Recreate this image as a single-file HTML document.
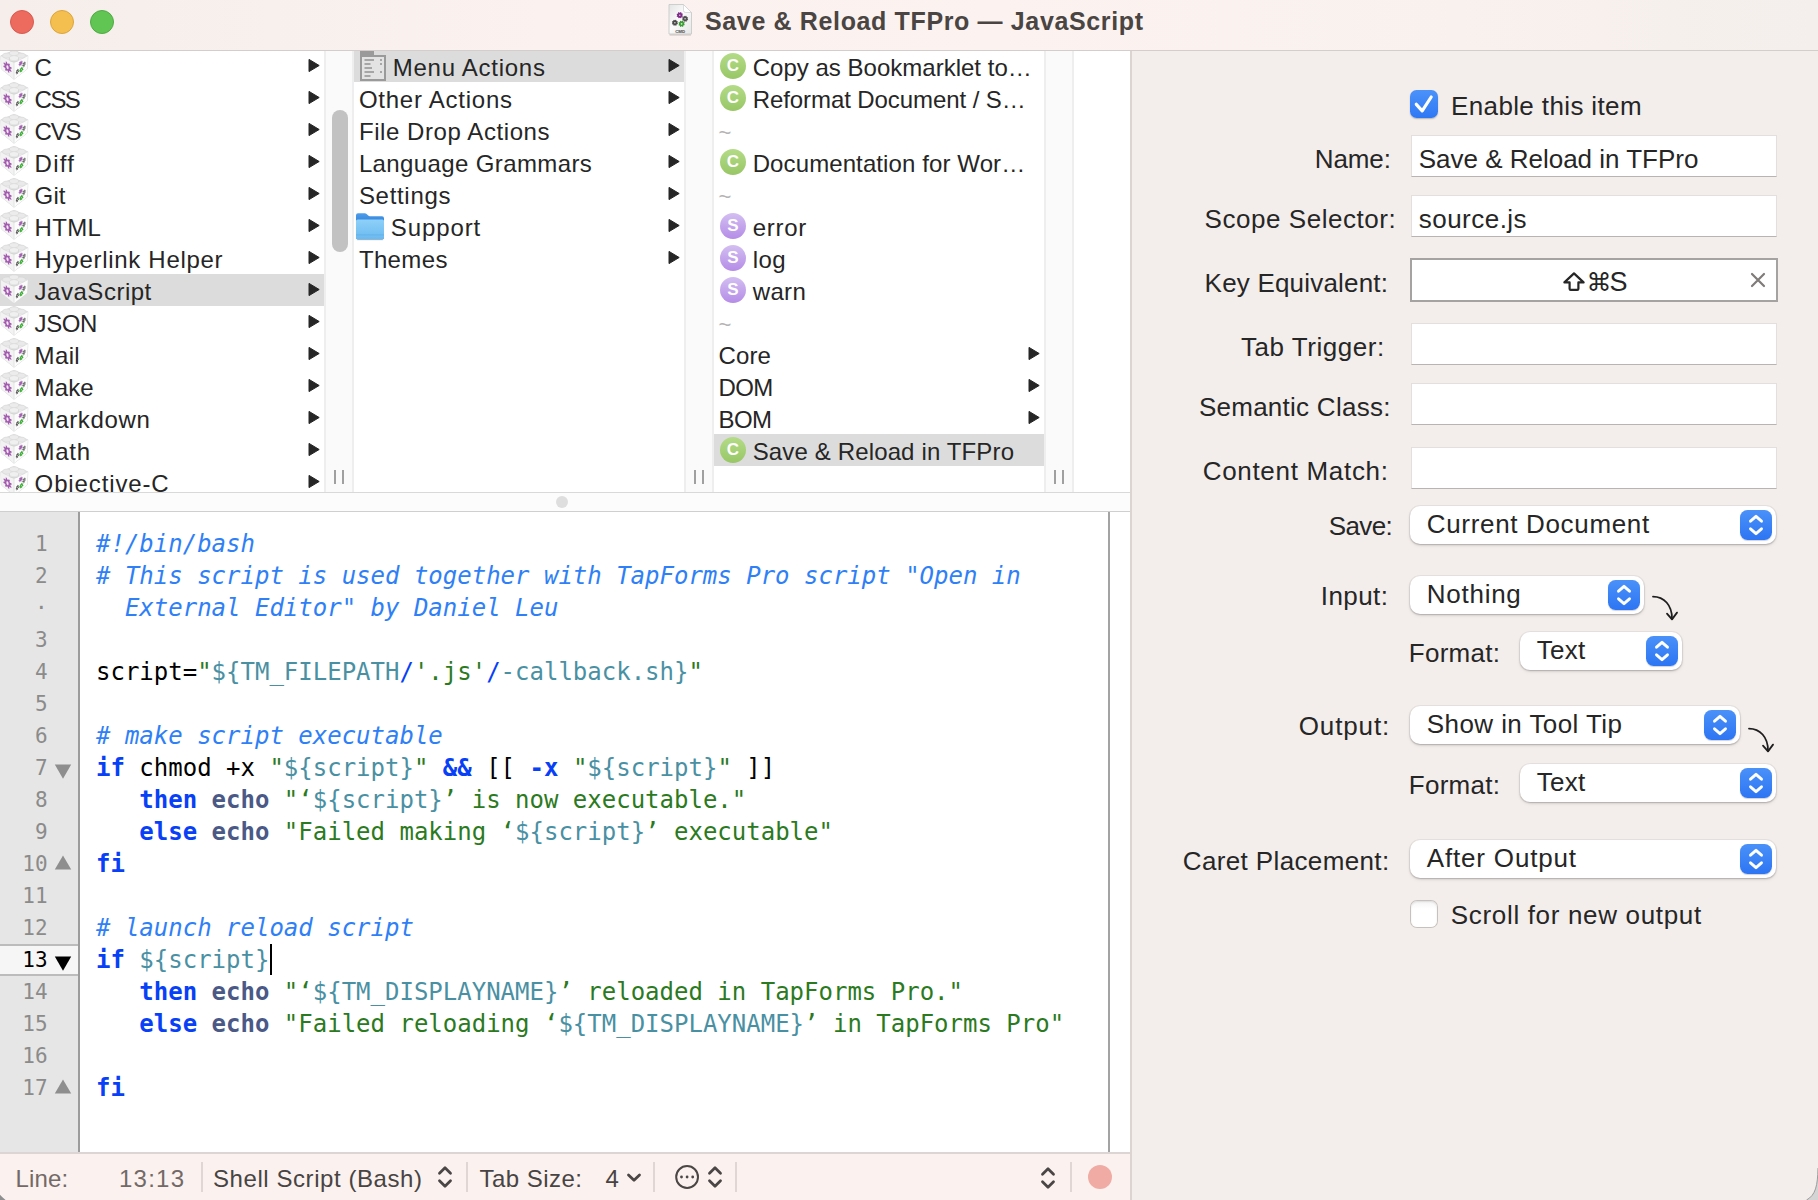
<!DOCTYPE html>
<html lang="en"><head><meta charset="utf-8"><title>Save &amp; Reload TFPro — JavaScript</title>
<style>
html,body{margin:0;padding:0}
body{width:1818px;height:1200px;overflow:hidden;position:relative;background:#f3eeeb;font-family:"Liberation Sans",sans-serif}
.ab{position:absolute;display:block}
.t{position:absolute;white-space:pre;line-height:32px;height:32px}
.fld{position:absolute;background:#fff;box-sizing:border-box;border:1px solid #e4dfdc;border-bottom-color:#b9b4b1}
.pop{position:absolute;background:#fff;border-radius:10px;box-shadow:0 0 0 1px rgba(0,0,0,.045),0 1px 2px rgba(0,0,0,.22),0 2px 4px rgba(0,0,0,.06);height:38px}
.stp{position:absolute;width:32px;height:30px;border-radius:7.5px;background:linear-gradient(#4a91f9,#2d75f3);box-shadow:0 1px 1px rgba(0,0,0,.18)}
</style></head><body>

<div class="ab" style="left:0;top:0;width:1818px;height:50px;background:linear-gradient(90deg,#f5eeeb 0%,#fbf2ef 30%,#fcf3f0 55%,#f9f1ee 80%,#f4efec 100%)"></div>
<div class="ab" style="left:0;top:50px;width:1818px;height:1px;background:#d3cdcb"></div>
<div class="ab" style="left:10px;top:10px;width:24px;height:24px;border-radius:12px;background:#ed6a5e;box-sizing:border-box;border:1px solid #d95a4e"></div>
<div class="ab" style="left:50px;top:10px;width:24px;height:24px;border-radius:12px;background:#f5bf4f;box-sizing:border-box;border:1px solid #dba53c"></div>
<div class="ab" style="left:90px;top:10px;width:24px;height:24px;border-radius:12px;background:#61c554;box-sizing:border-box;border:1px solid #50ab44"></div>
<svg class="ab" style="left:667px;top:3px" width="26" height="34" viewBox="0 0 26 34">
<defs><linearGradient id="dg" x1="0" y1="0" x2="1" y2="1"><stop offset="0" stop-color="#e4e4e4"/><stop offset="0.45" stop-color="#fbfbfb"/><stop offset="1" stop-color="#e6e6e6"/></linearGradient></defs>
<path d="M2.6 31.9 H24" stroke="#b8b0ad" stroke-width="1.2" opacity="0.7"/>
<path d="M2 1.5 H16.5 L24.5 9.5 V31 H2 Z" fill="url(#dg)" stroke="#c9c9c9" stroke-width="0.9"/>
<path d="M16.5 1.5 V7.5 Q16.5 9.5 18.5 9.5 H24.5 Z" fill="#ffffff" stroke="#cfcfcf" stroke-width="0.7"/>
<g transform="translate(12.8 12.2) scale(1.2)"><path d="M2.14 0.21 L2.62 0.65 L2.38 1.28 L1.73 1.27 L1.36 1.66 L1.40 2.31 L0.78 2.59 L0.32 2.13 L-0.21 2.14 L-0.65 2.62 L-1.28 2.38 L-1.27 1.73 L-1.66 1.36 L-2.31 1.40 L-2.59 0.78 L-2.13 0.32 L-2.14 -0.21 L-2.62 -0.65 L-2.38 -1.28 L-1.73 -1.27 L-1.36 -1.66 L-1.40 -2.31 L-0.78 -2.59 L-0.32 -2.13 L0.21 -2.14 L0.65 -2.62 L1.28 -2.38 L1.27 -1.73 L1.66 -1.36 L2.31 -1.40 L2.59 -0.78 L2.13 -0.32 Z" fill="#7d2b86"/><circle r="0.6" fill="#e6d5ea"/></g><g transform="translate(18.1 15.8) scale(1.15)"><path d="M2.14 0.21 L2.62 0.65 L2.38 1.28 L1.73 1.27 L1.36 1.66 L1.40 2.31 L0.78 2.59 L0.32 2.13 L-0.21 2.14 L-0.65 2.62 L-1.28 2.38 L-1.27 1.73 L-1.66 1.36 L-2.31 1.40 L-2.59 0.78 L-2.13 0.32 L-2.14 -0.21 L-2.62 -0.65 L-2.38 -1.28 L-1.73 -1.27 L-1.36 -1.66 L-1.40 -2.31 L-0.78 -2.59 L-0.32 -2.13 L0.21 -2.14 L0.65 -2.62 L1.28 -2.38 L1.27 -1.73 L1.66 -1.36 L2.31 -1.40 L2.59 -0.78 L2.13 -0.32 Z" fill="#4f4f4f"/><circle r="0.7" fill="#d8d8d8"/></g>
<g transform="translate(7.9 19.8) scale(1.15)"><path d="M2.14 0.21 L2.62 0.65 L2.38 1.28 L1.73 1.27 L1.36 1.66 L1.40 2.31 L0.78 2.59 L0.32 2.13 L-0.21 2.14 L-0.65 2.62 L-1.28 2.38 L-1.27 1.73 L-1.66 1.36 L-2.31 1.40 L-2.59 0.78 L-2.13 0.32 L-2.14 -0.21 L-2.62 -0.65 L-2.38 -1.28 L-1.73 -1.27 L-1.36 -1.66 L-1.40 -2.31 L-0.78 -2.59 L-0.32 -2.13 L0.21 -2.14 L0.65 -2.62 L1.28 -2.38 L1.27 -1.73 L1.66 -1.36 L2.31 -1.40 L2.59 -0.78 L2.13 -0.32 Z" fill="#474747"/><circle r="0.7" fill="#d8d8d8"/></g><g transform="translate(14.6 20.8) scale(1.2)"><path d="M2.14 0.21 L2.62 0.65 L2.38 1.28 L1.73 1.27 L1.36 1.66 L1.40 2.31 L0.78 2.59 L0.32 2.13 L-0.21 2.14 L-0.65 2.62 L-1.28 2.38 L-1.27 1.73 L-1.66 1.36 L-2.31 1.40 L-2.59 0.78 L-2.13 0.32 L-2.14 -0.21 L-2.62 -0.65 L-2.38 -1.28 L-1.73 -1.27 L-1.36 -1.66 L-1.40 -2.31 L-0.78 -2.59 L-0.32 -2.13 L0.21 -2.14 L0.65 -2.62 L1.28 -2.38 L1.27 -1.73 L1.66 -1.36 L2.31 -1.40 L2.59 -0.78 L2.13 -0.32 Z" fill="#3a9c34"/><circle r="0.7" fill="#cfeccd"/></g>
<text x="13.2" y="30" font-size="4.4" font-weight="bold" text-anchor="middle" fill="#444" font-family="Liberation Sans, sans-serif">CMD</text>
</svg>
<span class="t" id="t0" style="top:5.34px;font-size:25px;color:#4a4543;font-weight:bold;letter-spacing:0.639px;left:705px;">Save &amp; Reload TFPro — JavaScript</span>
<div class="ab" style="left:0;top:51px;width:1130px;height:441px;background:#fff"></div>
<div class="ab" style="left:0;top:51px;width:1130px;height:441px;overflow:hidden">
<div class="ab" style="left:0;top:223px;width:324px;height:32px;background:#dcdcdc"></div>
<div class="ab" style="left:354px;top:-1px;width:330px;height:32px;background:#dcdcdc"></div>
<div class="ab" style="left:714px;top:383px;width:330px;height:32px;background:#dcdcdc"></div>
<div class="ab" style="left:324px;top:0;width:30px;height:441px;background:#fafafa;box-sizing:border-box;border-left:2px solid #eeeeee;border-right:2px solid #eeeeee"></div>
<div class="ab" style="left:334px;top:419px;width:2px;height:14px;background:#a0a0a0"></div>
<div class="ab" style="left:342px;top:419px;width:2px;height:14px;background:#a0a0a0"></div>
<div class="ab" style="left:684px;top:0;width:30px;height:441px;background:#fafafa;box-sizing:border-box;border-left:2px solid #eeeeee;border-right:2px solid #eeeeee"></div>
<div class="ab" style="left:694px;top:419px;width:2px;height:14px;background:#a0a0a0"></div>
<div class="ab" style="left:702px;top:419px;width:2px;height:14px;background:#a0a0a0"></div>
<div class="ab" style="left:1044px;top:0;width:30px;height:441px;background:#fafafa;box-sizing:border-box;border-left:2px solid #eeeeee;border-right:2px solid #eeeeee"></div>
<div class="ab" style="left:1054px;top:419px;width:2px;height:14px;background:#a0a0a0"></div>
<div class="ab" style="left:1062px;top:419px;width:2px;height:14px;background:#a0a0a0"></div>
<div class="ab" style="left:332px;top:59px;width:16px;height:142px;border-radius:8px;background:#c2c2c2"></div>
<svg class="ab" style="left:0px;top:-1px" width="29" height="30" viewBox="0 0 29 30">
<path d="M14 0.6 L27.8 5.8 L27.2 19 L14 29.2 L1.4 19 L0.9 5.8 Z" fill="#f6f6f6" stroke="#d6d6d6" stroke-width="0.9" stroke-linejoin="round"/>
<path d="M14 12.6 L27.8 5.8 L27.2 19 L14 29.2 Z" fill="#fcfcfc"/>
<path d="M14 12.6 L0.9 5.8 L1.4 19 L14 29.2 Z" fill="#f3f3f3"/>
<path d="M0.9 5.8 L14 12.6 L27.8 5.8 M14 12.6 L14 29.2" fill="none" stroke="#dedede" stroke-width="0.8"/>
<ellipse cx="7.2" cy="5.6" rx="4.6" ry="2.5" fill="#e9e9e9" stroke="#d5d5d5" stroke-width="0.6"/>
<ellipse cx="20.8" cy="5.6" rx="4.6" ry="2.5" fill="#e9e9e9" stroke="#d5d5d5" stroke-width="0.6"/>
<ellipse cx="14" cy="3.2" rx="4.6" ry="2.4" fill="#ececec" stroke="#d5d5d5" stroke-width="0.6"/>
<ellipse cx="14" cy="9" rx="4.8" ry="2.7" fill="#e4e4e4" stroke="#cfcfcf" stroke-width="0.7"/>
<ellipse cx="14" cy="8" rx="4.2" ry="2.1" fill="#f0f0f0"/>
<g transform="matrix(0.86 0.5 0 1 7.5 17.2)"><path d="M3.43 0.70 L4.71 1.67 L4.15 2.79 L2.60 2.34 L1.93 2.92 L2.15 4.52 L0.96 4.91 L0.18 3.50 L-0.70 3.43 L-1.67 4.71 L-2.79 4.15 L-2.34 2.60 L-2.92 1.93 L-4.52 2.15 L-4.91 0.96 L-3.50 0.18 L-3.43 -0.70 L-4.71 -1.67 L-4.15 -2.79 L-2.60 -2.34 L-1.93 -2.92 L-2.15 -4.52 L-0.96 -4.91 L-0.18 -3.50 L0.70 -3.43 L1.67 -4.71 L2.79 -4.15 L2.34 -2.60 L2.92 -1.93 L4.52 -2.15 L4.91 -0.96 L3.50 -0.18 Z" fill="#a35bb0"/><ellipse cx="0" cy="0" rx="1.3" ry="1.9" fill="#f3ecf5"/></g>
<g transform="matrix(0.8 -0.5 0 1 20.7 13.3)"><path d="M1.79 0.18 L2.51 0.67 L2.22 1.36 L1.36 1.17 L0.98 1.51 L1.04 2.38 L0.32 2.58 L-0.07 1.80 L-0.57 1.71 L-1.21 2.30 L-1.82 1.86 L-1.45 1.07 L-1.69 0.62 L-2.55 0.48 L-2.59 -0.26 L-1.74 -0.47 L-1.54 -0.94 L-1.97 -1.70 L-1.41 -2.18 L-0.72 -1.65 L-0.22 -1.79 L0.10 -2.60 L0.83 -2.46 L0.84 -1.59 L1.26 -1.29 L2.09 -1.54 L2.44 -0.89 L1.77 -0.34 Z" fill="#a660b3"/></g>
<g transform="matrix(0.7 -0.5 0 1 24 14.3)"><path d="M1.79 0.18 L2.51 0.67 L2.22 1.36 L1.36 1.17 L0.98 1.51 L1.04 2.38 L0.32 2.58 L-0.07 1.80 L-0.57 1.71 L-1.21 2.30 L-1.82 1.86 L-1.45 1.07 L-1.69 0.62 L-2.55 0.48 L-2.59 -0.26 L-1.74 -0.47 L-1.54 -0.94 L-1.97 -1.70 L-1.41 -2.18 L-0.72 -1.65 L-0.22 -1.79 L0.10 -2.60 L0.83 -2.46 L0.84 -1.59 L1.26 -1.29 L2.09 -1.54 L2.44 -0.89 L1.77 -0.34 Z" fill="#6a6a6a"/><circle r="0.7" fill="#ddd"/></g>
<g transform="matrix(0.85 -0.5 0 1 21.3 19.7)"><path d="M1.79 0.18 L2.51 0.67 L2.22 1.36 L1.36 1.17 L0.98 1.51 L1.04 2.38 L0.32 2.58 L-0.07 1.80 L-0.57 1.71 L-1.21 2.30 L-1.82 1.86 L-1.45 1.07 L-1.69 0.62 L-2.55 0.48 L-2.59 -0.26 L-1.74 -0.47 L-1.54 -0.94 L-1.97 -1.70 L-1.41 -2.18 L-0.72 -1.65 L-0.22 -1.79 L0.10 -2.60 L0.83 -2.46 L0.84 -1.59 L1.26 -1.29 L2.09 -1.54 L2.44 -0.89 L1.77 -0.34 Z" fill="#3aae35"/><circle r="0.6" fill="#bfe6bd"/></g>
<g transform="matrix(0.65 -0.5 0 1 17.4 21.6)"><path d="M1.79 0.18 L2.51 0.67 L2.22 1.36 L1.36 1.17 L0.98 1.51 L1.04 2.38 L0.32 2.58 L-0.07 1.80 L-0.57 1.71 L-1.21 2.30 L-1.82 1.86 L-1.45 1.07 L-1.69 0.62 L-2.55 0.48 L-2.59 -0.26 L-1.74 -0.47 L-1.54 -0.94 L-1.97 -1.70 L-1.41 -2.18 L-0.72 -1.65 L-0.22 -1.79 L0.10 -2.60 L0.83 -2.46 L0.84 -1.59 L1.26 -1.29 L2.09 -1.54 L2.44 -0.89 L1.77 -0.34 Z" fill="#555"/><circle r="0.7" fill="#ddd"/></g>
</svg>
<span class="t" id="t1" style="top:0.68px;font-size:24px;color:#262626;left:34.6px;">C</span>
<svg class="ab" style="left:308px;top:7px" width="13" height="15" viewBox="0 0 13 15"><path d="M1 1.4 L11.2 7.5 L1 13.6 Z" fill="#262626" stroke="#262626" stroke-width="1" stroke-linejoin="round"/></svg>
<svg class="ab" style="left:0px;top:31px" width="29" height="30" viewBox="0 0 29 30">
<path d="M14 0.6 L27.8 5.8 L27.2 19 L14 29.2 L1.4 19 L0.9 5.8 Z" fill="#f6f6f6" stroke="#d6d6d6" stroke-width="0.9" stroke-linejoin="round"/>
<path d="M14 12.6 L27.8 5.8 L27.2 19 L14 29.2 Z" fill="#fcfcfc"/>
<path d="M14 12.6 L0.9 5.8 L1.4 19 L14 29.2 Z" fill="#f3f3f3"/>
<path d="M0.9 5.8 L14 12.6 L27.8 5.8 M14 12.6 L14 29.2" fill="none" stroke="#dedede" stroke-width="0.8"/>
<ellipse cx="7.2" cy="5.6" rx="4.6" ry="2.5" fill="#e9e9e9" stroke="#d5d5d5" stroke-width="0.6"/>
<ellipse cx="20.8" cy="5.6" rx="4.6" ry="2.5" fill="#e9e9e9" stroke="#d5d5d5" stroke-width="0.6"/>
<ellipse cx="14" cy="3.2" rx="4.6" ry="2.4" fill="#ececec" stroke="#d5d5d5" stroke-width="0.6"/>
<ellipse cx="14" cy="9" rx="4.8" ry="2.7" fill="#e4e4e4" stroke="#cfcfcf" stroke-width="0.7"/>
<ellipse cx="14" cy="8" rx="4.2" ry="2.1" fill="#f0f0f0"/>
<g transform="matrix(0.86 0.5 0 1 7.5 17.2)"><path d="M3.43 0.70 L4.71 1.67 L4.15 2.79 L2.60 2.34 L1.93 2.92 L2.15 4.52 L0.96 4.91 L0.18 3.50 L-0.70 3.43 L-1.67 4.71 L-2.79 4.15 L-2.34 2.60 L-2.92 1.93 L-4.52 2.15 L-4.91 0.96 L-3.50 0.18 L-3.43 -0.70 L-4.71 -1.67 L-4.15 -2.79 L-2.60 -2.34 L-1.93 -2.92 L-2.15 -4.52 L-0.96 -4.91 L-0.18 -3.50 L0.70 -3.43 L1.67 -4.71 L2.79 -4.15 L2.34 -2.60 L2.92 -1.93 L4.52 -2.15 L4.91 -0.96 L3.50 -0.18 Z" fill="#a35bb0"/><ellipse cx="0" cy="0" rx="1.3" ry="1.9" fill="#f3ecf5"/></g>
<g transform="matrix(0.8 -0.5 0 1 20.7 13.3)"><path d="M1.79 0.18 L2.51 0.67 L2.22 1.36 L1.36 1.17 L0.98 1.51 L1.04 2.38 L0.32 2.58 L-0.07 1.80 L-0.57 1.71 L-1.21 2.30 L-1.82 1.86 L-1.45 1.07 L-1.69 0.62 L-2.55 0.48 L-2.59 -0.26 L-1.74 -0.47 L-1.54 -0.94 L-1.97 -1.70 L-1.41 -2.18 L-0.72 -1.65 L-0.22 -1.79 L0.10 -2.60 L0.83 -2.46 L0.84 -1.59 L1.26 -1.29 L2.09 -1.54 L2.44 -0.89 L1.77 -0.34 Z" fill="#a660b3"/></g>
<g transform="matrix(0.7 -0.5 0 1 24 14.3)"><path d="M1.79 0.18 L2.51 0.67 L2.22 1.36 L1.36 1.17 L0.98 1.51 L1.04 2.38 L0.32 2.58 L-0.07 1.80 L-0.57 1.71 L-1.21 2.30 L-1.82 1.86 L-1.45 1.07 L-1.69 0.62 L-2.55 0.48 L-2.59 -0.26 L-1.74 -0.47 L-1.54 -0.94 L-1.97 -1.70 L-1.41 -2.18 L-0.72 -1.65 L-0.22 -1.79 L0.10 -2.60 L0.83 -2.46 L0.84 -1.59 L1.26 -1.29 L2.09 -1.54 L2.44 -0.89 L1.77 -0.34 Z" fill="#6a6a6a"/><circle r="0.7" fill="#ddd"/></g>
<g transform="matrix(0.85 -0.5 0 1 21.3 19.7)"><path d="M1.79 0.18 L2.51 0.67 L2.22 1.36 L1.36 1.17 L0.98 1.51 L1.04 2.38 L0.32 2.58 L-0.07 1.80 L-0.57 1.71 L-1.21 2.30 L-1.82 1.86 L-1.45 1.07 L-1.69 0.62 L-2.55 0.48 L-2.59 -0.26 L-1.74 -0.47 L-1.54 -0.94 L-1.97 -1.70 L-1.41 -2.18 L-0.72 -1.65 L-0.22 -1.79 L0.10 -2.60 L0.83 -2.46 L0.84 -1.59 L1.26 -1.29 L2.09 -1.54 L2.44 -0.89 L1.77 -0.34 Z" fill="#3aae35"/><circle r="0.6" fill="#bfe6bd"/></g>
<g transform="matrix(0.65 -0.5 0 1 17.4 21.6)"><path d="M1.79 0.18 L2.51 0.67 L2.22 1.36 L1.36 1.17 L0.98 1.51 L1.04 2.38 L0.32 2.58 L-0.07 1.80 L-0.57 1.71 L-1.21 2.30 L-1.82 1.86 L-1.45 1.07 L-1.69 0.62 L-2.55 0.48 L-2.59 -0.26 L-1.74 -0.47 L-1.54 -0.94 L-1.97 -1.70 L-1.41 -2.18 L-0.72 -1.65 L-0.22 -1.79 L0.10 -2.60 L0.83 -2.46 L0.84 -1.59 L1.26 -1.29 L2.09 -1.54 L2.44 -0.89 L1.77 -0.34 Z" fill="#555"/><circle r="0.7" fill="#ddd"/></g>
</svg>
<span class="t" id="t2" style="top:32.68px;font-size:24px;color:#262626;letter-spacing:-1.530px;left:34.6px;">CSS</span>
<svg class="ab" style="left:308px;top:39px" width="13" height="15" viewBox="0 0 13 15"><path d="M1 1.4 L11.2 7.5 L1 13.6 Z" fill="#262626" stroke="#262626" stroke-width="1" stroke-linejoin="round"/></svg>
<svg class="ab" style="left:0px;top:63px" width="29" height="30" viewBox="0 0 29 30">
<path d="M14 0.6 L27.8 5.8 L27.2 19 L14 29.2 L1.4 19 L0.9 5.8 Z" fill="#f6f6f6" stroke="#d6d6d6" stroke-width="0.9" stroke-linejoin="round"/>
<path d="M14 12.6 L27.8 5.8 L27.2 19 L14 29.2 Z" fill="#fcfcfc"/>
<path d="M14 12.6 L0.9 5.8 L1.4 19 L14 29.2 Z" fill="#f3f3f3"/>
<path d="M0.9 5.8 L14 12.6 L27.8 5.8 M14 12.6 L14 29.2" fill="none" stroke="#dedede" stroke-width="0.8"/>
<ellipse cx="7.2" cy="5.6" rx="4.6" ry="2.5" fill="#e9e9e9" stroke="#d5d5d5" stroke-width="0.6"/>
<ellipse cx="20.8" cy="5.6" rx="4.6" ry="2.5" fill="#e9e9e9" stroke="#d5d5d5" stroke-width="0.6"/>
<ellipse cx="14" cy="3.2" rx="4.6" ry="2.4" fill="#ececec" stroke="#d5d5d5" stroke-width="0.6"/>
<ellipse cx="14" cy="9" rx="4.8" ry="2.7" fill="#e4e4e4" stroke="#cfcfcf" stroke-width="0.7"/>
<ellipse cx="14" cy="8" rx="4.2" ry="2.1" fill="#f0f0f0"/>
<g transform="matrix(0.86 0.5 0 1 7.5 17.2)"><path d="M3.43 0.70 L4.71 1.67 L4.15 2.79 L2.60 2.34 L1.93 2.92 L2.15 4.52 L0.96 4.91 L0.18 3.50 L-0.70 3.43 L-1.67 4.71 L-2.79 4.15 L-2.34 2.60 L-2.92 1.93 L-4.52 2.15 L-4.91 0.96 L-3.50 0.18 L-3.43 -0.70 L-4.71 -1.67 L-4.15 -2.79 L-2.60 -2.34 L-1.93 -2.92 L-2.15 -4.52 L-0.96 -4.91 L-0.18 -3.50 L0.70 -3.43 L1.67 -4.71 L2.79 -4.15 L2.34 -2.60 L2.92 -1.93 L4.52 -2.15 L4.91 -0.96 L3.50 -0.18 Z" fill="#a35bb0"/><ellipse cx="0" cy="0" rx="1.3" ry="1.9" fill="#f3ecf5"/></g>
<g transform="matrix(0.8 -0.5 0 1 20.7 13.3)"><path d="M1.79 0.18 L2.51 0.67 L2.22 1.36 L1.36 1.17 L0.98 1.51 L1.04 2.38 L0.32 2.58 L-0.07 1.80 L-0.57 1.71 L-1.21 2.30 L-1.82 1.86 L-1.45 1.07 L-1.69 0.62 L-2.55 0.48 L-2.59 -0.26 L-1.74 -0.47 L-1.54 -0.94 L-1.97 -1.70 L-1.41 -2.18 L-0.72 -1.65 L-0.22 -1.79 L0.10 -2.60 L0.83 -2.46 L0.84 -1.59 L1.26 -1.29 L2.09 -1.54 L2.44 -0.89 L1.77 -0.34 Z" fill="#a660b3"/></g>
<g transform="matrix(0.7 -0.5 0 1 24 14.3)"><path d="M1.79 0.18 L2.51 0.67 L2.22 1.36 L1.36 1.17 L0.98 1.51 L1.04 2.38 L0.32 2.58 L-0.07 1.80 L-0.57 1.71 L-1.21 2.30 L-1.82 1.86 L-1.45 1.07 L-1.69 0.62 L-2.55 0.48 L-2.59 -0.26 L-1.74 -0.47 L-1.54 -0.94 L-1.97 -1.70 L-1.41 -2.18 L-0.72 -1.65 L-0.22 -1.79 L0.10 -2.60 L0.83 -2.46 L0.84 -1.59 L1.26 -1.29 L2.09 -1.54 L2.44 -0.89 L1.77 -0.34 Z" fill="#6a6a6a"/><circle r="0.7" fill="#ddd"/></g>
<g transform="matrix(0.85 -0.5 0 1 21.3 19.7)"><path d="M1.79 0.18 L2.51 0.67 L2.22 1.36 L1.36 1.17 L0.98 1.51 L1.04 2.38 L0.32 2.58 L-0.07 1.80 L-0.57 1.71 L-1.21 2.30 L-1.82 1.86 L-1.45 1.07 L-1.69 0.62 L-2.55 0.48 L-2.59 -0.26 L-1.74 -0.47 L-1.54 -0.94 L-1.97 -1.70 L-1.41 -2.18 L-0.72 -1.65 L-0.22 -1.79 L0.10 -2.60 L0.83 -2.46 L0.84 -1.59 L1.26 -1.29 L2.09 -1.54 L2.44 -0.89 L1.77 -0.34 Z" fill="#3aae35"/><circle r="0.6" fill="#bfe6bd"/></g>
<g transform="matrix(0.65 -0.5 0 1 17.4 21.6)"><path d="M1.79 0.18 L2.51 0.67 L2.22 1.36 L1.36 1.17 L0.98 1.51 L1.04 2.38 L0.32 2.58 L-0.07 1.80 L-0.57 1.71 L-1.21 2.30 L-1.82 1.86 L-1.45 1.07 L-1.69 0.62 L-2.55 0.48 L-2.59 -0.26 L-1.74 -0.47 L-1.54 -0.94 L-1.97 -1.70 L-1.41 -2.18 L-0.72 -1.65 L-0.22 -1.79 L0.10 -2.60 L0.83 -2.46 L0.84 -1.59 L1.26 -1.29 L2.09 -1.54 L2.44 -0.89 L1.77 -0.34 Z" fill="#555"/><circle r="0.7" fill="#ddd"/></g>
</svg>
<span class="t" id="t3" style="top:64.68px;font-size:24px;color:#262626;letter-spacing:-1.180px;left:34.6px;">CVS</span>
<svg class="ab" style="left:308px;top:71px" width="13" height="15" viewBox="0 0 13 15"><path d="M1 1.4 L11.2 7.5 L1 13.6 Z" fill="#262626" stroke="#262626" stroke-width="1" stroke-linejoin="round"/></svg>
<svg class="ab" style="left:0px;top:95px" width="29" height="30" viewBox="0 0 29 30">
<path d="M14 0.6 L27.8 5.8 L27.2 19 L14 29.2 L1.4 19 L0.9 5.8 Z" fill="#f6f6f6" stroke="#d6d6d6" stroke-width="0.9" stroke-linejoin="round"/>
<path d="M14 12.6 L27.8 5.8 L27.2 19 L14 29.2 Z" fill="#fcfcfc"/>
<path d="M14 12.6 L0.9 5.8 L1.4 19 L14 29.2 Z" fill="#f3f3f3"/>
<path d="M0.9 5.8 L14 12.6 L27.8 5.8 M14 12.6 L14 29.2" fill="none" stroke="#dedede" stroke-width="0.8"/>
<ellipse cx="7.2" cy="5.6" rx="4.6" ry="2.5" fill="#e9e9e9" stroke="#d5d5d5" stroke-width="0.6"/>
<ellipse cx="20.8" cy="5.6" rx="4.6" ry="2.5" fill="#e9e9e9" stroke="#d5d5d5" stroke-width="0.6"/>
<ellipse cx="14" cy="3.2" rx="4.6" ry="2.4" fill="#ececec" stroke="#d5d5d5" stroke-width="0.6"/>
<ellipse cx="14" cy="9" rx="4.8" ry="2.7" fill="#e4e4e4" stroke="#cfcfcf" stroke-width="0.7"/>
<ellipse cx="14" cy="8" rx="4.2" ry="2.1" fill="#f0f0f0"/>
<g transform="matrix(0.86 0.5 0 1 7.5 17.2)"><path d="M3.43 0.70 L4.71 1.67 L4.15 2.79 L2.60 2.34 L1.93 2.92 L2.15 4.52 L0.96 4.91 L0.18 3.50 L-0.70 3.43 L-1.67 4.71 L-2.79 4.15 L-2.34 2.60 L-2.92 1.93 L-4.52 2.15 L-4.91 0.96 L-3.50 0.18 L-3.43 -0.70 L-4.71 -1.67 L-4.15 -2.79 L-2.60 -2.34 L-1.93 -2.92 L-2.15 -4.52 L-0.96 -4.91 L-0.18 -3.50 L0.70 -3.43 L1.67 -4.71 L2.79 -4.15 L2.34 -2.60 L2.92 -1.93 L4.52 -2.15 L4.91 -0.96 L3.50 -0.18 Z" fill="#a35bb0"/><ellipse cx="0" cy="0" rx="1.3" ry="1.9" fill="#f3ecf5"/></g>
<g transform="matrix(0.8 -0.5 0 1 20.7 13.3)"><path d="M1.79 0.18 L2.51 0.67 L2.22 1.36 L1.36 1.17 L0.98 1.51 L1.04 2.38 L0.32 2.58 L-0.07 1.80 L-0.57 1.71 L-1.21 2.30 L-1.82 1.86 L-1.45 1.07 L-1.69 0.62 L-2.55 0.48 L-2.59 -0.26 L-1.74 -0.47 L-1.54 -0.94 L-1.97 -1.70 L-1.41 -2.18 L-0.72 -1.65 L-0.22 -1.79 L0.10 -2.60 L0.83 -2.46 L0.84 -1.59 L1.26 -1.29 L2.09 -1.54 L2.44 -0.89 L1.77 -0.34 Z" fill="#a660b3"/></g>
<g transform="matrix(0.7 -0.5 0 1 24 14.3)"><path d="M1.79 0.18 L2.51 0.67 L2.22 1.36 L1.36 1.17 L0.98 1.51 L1.04 2.38 L0.32 2.58 L-0.07 1.80 L-0.57 1.71 L-1.21 2.30 L-1.82 1.86 L-1.45 1.07 L-1.69 0.62 L-2.55 0.48 L-2.59 -0.26 L-1.74 -0.47 L-1.54 -0.94 L-1.97 -1.70 L-1.41 -2.18 L-0.72 -1.65 L-0.22 -1.79 L0.10 -2.60 L0.83 -2.46 L0.84 -1.59 L1.26 -1.29 L2.09 -1.54 L2.44 -0.89 L1.77 -0.34 Z" fill="#6a6a6a"/><circle r="0.7" fill="#ddd"/></g>
<g transform="matrix(0.85 -0.5 0 1 21.3 19.7)"><path d="M1.79 0.18 L2.51 0.67 L2.22 1.36 L1.36 1.17 L0.98 1.51 L1.04 2.38 L0.32 2.58 L-0.07 1.80 L-0.57 1.71 L-1.21 2.30 L-1.82 1.86 L-1.45 1.07 L-1.69 0.62 L-2.55 0.48 L-2.59 -0.26 L-1.74 -0.47 L-1.54 -0.94 L-1.97 -1.70 L-1.41 -2.18 L-0.72 -1.65 L-0.22 -1.79 L0.10 -2.60 L0.83 -2.46 L0.84 -1.59 L1.26 -1.29 L2.09 -1.54 L2.44 -0.89 L1.77 -0.34 Z" fill="#3aae35"/><circle r="0.6" fill="#bfe6bd"/></g>
<g transform="matrix(0.65 -0.5 0 1 17.4 21.6)"><path d="M1.79 0.18 L2.51 0.67 L2.22 1.36 L1.36 1.17 L0.98 1.51 L1.04 2.38 L0.32 2.58 L-0.07 1.80 L-0.57 1.71 L-1.21 2.30 L-1.82 1.86 L-1.45 1.07 L-1.69 0.62 L-2.55 0.48 L-2.59 -0.26 L-1.74 -0.47 L-1.54 -0.94 L-1.97 -1.70 L-1.41 -2.18 L-0.72 -1.65 L-0.22 -1.79 L0.10 -2.60 L0.83 -2.46 L0.84 -1.59 L1.26 -1.29 L2.09 -1.54 L2.44 -0.89 L1.77 -0.34 Z" fill="#555"/><circle r="0.7" fill="#ddd"/></g>
</svg>
<span class="t" id="t4" style="top:96.68px;font-size:24px;color:#262626;letter-spacing:1.241px;left:34.6px;">Diff</span>
<svg class="ab" style="left:308px;top:103px" width="13" height="15" viewBox="0 0 13 15"><path d="M1 1.4 L11.2 7.5 L1 13.6 Z" fill="#262626" stroke="#262626" stroke-width="1" stroke-linejoin="round"/></svg>
<svg class="ab" style="left:0px;top:127px" width="29" height="30" viewBox="0 0 29 30">
<path d="M14 0.6 L27.8 5.8 L27.2 19 L14 29.2 L1.4 19 L0.9 5.8 Z" fill="#f6f6f6" stroke="#d6d6d6" stroke-width="0.9" stroke-linejoin="round"/>
<path d="M14 12.6 L27.8 5.8 L27.2 19 L14 29.2 Z" fill="#fcfcfc"/>
<path d="M14 12.6 L0.9 5.8 L1.4 19 L14 29.2 Z" fill="#f3f3f3"/>
<path d="M0.9 5.8 L14 12.6 L27.8 5.8 M14 12.6 L14 29.2" fill="none" stroke="#dedede" stroke-width="0.8"/>
<ellipse cx="7.2" cy="5.6" rx="4.6" ry="2.5" fill="#e9e9e9" stroke="#d5d5d5" stroke-width="0.6"/>
<ellipse cx="20.8" cy="5.6" rx="4.6" ry="2.5" fill="#e9e9e9" stroke="#d5d5d5" stroke-width="0.6"/>
<ellipse cx="14" cy="3.2" rx="4.6" ry="2.4" fill="#ececec" stroke="#d5d5d5" stroke-width="0.6"/>
<ellipse cx="14" cy="9" rx="4.8" ry="2.7" fill="#e4e4e4" stroke="#cfcfcf" stroke-width="0.7"/>
<ellipse cx="14" cy="8" rx="4.2" ry="2.1" fill="#f0f0f0"/>
<g transform="matrix(0.86 0.5 0 1 7.5 17.2)"><path d="M3.43 0.70 L4.71 1.67 L4.15 2.79 L2.60 2.34 L1.93 2.92 L2.15 4.52 L0.96 4.91 L0.18 3.50 L-0.70 3.43 L-1.67 4.71 L-2.79 4.15 L-2.34 2.60 L-2.92 1.93 L-4.52 2.15 L-4.91 0.96 L-3.50 0.18 L-3.43 -0.70 L-4.71 -1.67 L-4.15 -2.79 L-2.60 -2.34 L-1.93 -2.92 L-2.15 -4.52 L-0.96 -4.91 L-0.18 -3.50 L0.70 -3.43 L1.67 -4.71 L2.79 -4.15 L2.34 -2.60 L2.92 -1.93 L4.52 -2.15 L4.91 -0.96 L3.50 -0.18 Z" fill="#a35bb0"/><ellipse cx="0" cy="0" rx="1.3" ry="1.9" fill="#f3ecf5"/></g>
<g transform="matrix(0.8 -0.5 0 1 20.7 13.3)"><path d="M1.79 0.18 L2.51 0.67 L2.22 1.36 L1.36 1.17 L0.98 1.51 L1.04 2.38 L0.32 2.58 L-0.07 1.80 L-0.57 1.71 L-1.21 2.30 L-1.82 1.86 L-1.45 1.07 L-1.69 0.62 L-2.55 0.48 L-2.59 -0.26 L-1.74 -0.47 L-1.54 -0.94 L-1.97 -1.70 L-1.41 -2.18 L-0.72 -1.65 L-0.22 -1.79 L0.10 -2.60 L0.83 -2.46 L0.84 -1.59 L1.26 -1.29 L2.09 -1.54 L2.44 -0.89 L1.77 -0.34 Z" fill="#a660b3"/></g>
<g transform="matrix(0.7 -0.5 0 1 24 14.3)"><path d="M1.79 0.18 L2.51 0.67 L2.22 1.36 L1.36 1.17 L0.98 1.51 L1.04 2.38 L0.32 2.58 L-0.07 1.80 L-0.57 1.71 L-1.21 2.30 L-1.82 1.86 L-1.45 1.07 L-1.69 0.62 L-2.55 0.48 L-2.59 -0.26 L-1.74 -0.47 L-1.54 -0.94 L-1.97 -1.70 L-1.41 -2.18 L-0.72 -1.65 L-0.22 -1.79 L0.10 -2.60 L0.83 -2.46 L0.84 -1.59 L1.26 -1.29 L2.09 -1.54 L2.44 -0.89 L1.77 -0.34 Z" fill="#6a6a6a"/><circle r="0.7" fill="#ddd"/></g>
<g transform="matrix(0.85 -0.5 0 1 21.3 19.7)"><path d="M1.79 0.18 L2.51 0.67 L2.22 1.36 L1.36 1.17 L0.98 1.51 L1.04 2.38 L0.32 2.58 L-0.07 1.80 L-0.57 1.71 L-1.21 2.30 L-1.82 1.86 L-1.45 1.07 L-1.69 0.62 L-2.55 0.48 L-2.59 -0.26 L-1.74 -0.47 L-1.54 -0.94 L-1.97 -1.70 L-1.41 -2.18 L-0.72 -1.65 L-0.22 -1.79 L0.10 -2.60 L0.83 -2.46 L0.84 -1.59 L1.26 -1.29 L2.09 -1.54 L2.44 -0.89 L1.77 -0.34 Z" fill="#3aae35"/><circle r="0.6" fill="#bfe6bd"/></g>
<g transform="matrix(0.65 -0.5 0 1 17.4 21.6)"><path d="M1.79 0.18 L2.51 0.67 L2.22 1.36 L1.36 1.17 L0.98 1.51 L1.04 2.38 L0.32 2.58 L-0.07 1.80 L-0.57 1.71 L-1.21 2.30 L-1.82 1.86 L-1.45 1.07 L-1.69 0.62 L-2.55 0.48 L-2.59 -0.26 L-1.74 -0.47 L-1.54 -0.94 L-1.97 -1.70 L-1.41 -2.18 L-0.72 -1.65 L-0.22 -1.79 L0.10 -2.60 L0.83 -2.46 L0.84 -1.59 L1.26 -1.29 L2.09 -1.54 L2.44 -0.89 L1.77 -0.34 Z" fill="#555"/><circle r="0.7" fill="#ddd"/></g>
</svg>
<span class="t" id="t5" style="top:128.68px;font-size:24px;color:#262626;letter-spacing:0.114px;left:34.6px;">Git</span>
<svg class="ab" style="left:308px;top:135px" width="13" height="15" viewBox="0 0 13 15"><path d="M1 1.4 L11.2 7.5 L1 13.6 Z" fill="#262626" stroke="#262626" stroke-width="1" stroke-linejoin="round"/></svg>
<svg class="ab" style="left:0px;top:159px" width="29" height="30" viewBox="0 0 29 30">
<path d="M14 0.6 L27.8 5.8 L27.2 19 L14 29.2 L1.4 19 L0.9 5.8 Z" fill="#f6f6f6" stroke="#d6d6d6" stroke-width="0.9" stroke-linejoin="round"/>
<path d="M14 12.6 L27.8 5.8 L27.2 19 L14 29.2 Z" fill="#fcfcfc"/>
<path d="M14 12.6 L0.9 5.8 L1.4 19 L14 29.2 Z" fill="#f3f3f3"/>
<path d="M0.9 5.8 L14 12.6 L27.8 5.8 M14 12.6 L14 29.2" fill="none" stroke="#dedede" stroke-width="0.8"/>
<ellipse cx="7.2" cy="5.6" rx="4.6" ry="2.5" fill="#e9e9e9" stroke="#d5d5d5" stroke-width="0.6"/>
<ellipse cx="20.8" cy="5.6" rx="4.6" ry="2.5" fill="#e9e9e9" stroke="#d5d5d5" stroke-width="0.6"/>
<ellipse cx="14" cy="3.2" rx="4.6" ry="2.4" fill="#ececec" stroke="#d5d5d5" stroke-width="0.6"/>
<ellipse cx="14" cy="9" rx="4.8" ry="2.7" fill="#e4e4e4" stroke="#cfcfcf" stroke-width="0.7"/>
<ellipse cx="14" cy="8" rx="4.2" ry="2.1" fill="#f0f0f0"/>
<g transform="matrix(0.86 0.5 0 1 7.5 17.2)"><path d="M3.43 0.70 L4.71 1.67 L4.15 2.79 L2.60 2.34 L1.93 2.92 L2.15 4.52 L0.96 4.91 L0.18 3.50 L-0.70 3.43 L-1.67 4.71 L-2.79 4.15 L-2.34 2.60 L-2.92 1.93 L-4.52 2.15 L-4.91 0.96 L-3.50 0.18 L-3.43 -0.70 L-4.71 -1.67 L-4.15 -2.79 L-2.60 -2.34 L-1.93 -2.92 L-2.15 -4.52 L-0.96 -4.91 L-0.18 -3.50 L0.70 -3.43 L1.67 -4.71 L2.79 -4.15 L2.34 -2.60 L2.92 -1.93 L4.52 -2.15 L4.91 -0.96 L3.50 -0.18 Z" fill="#a35bb0"/><ellipse cx="0" cy="0" rx="1.3" ry="1.9" fill="#f3ecf5"/></g>
<g transform="matrix(0.8 -0.5 0 1 20.7 13.3)"><path d="M1.79 0.18 L2.51 0.67 L2.22 1.36 L1.36 1.17 L0.98 1.51 L1.04 2.38 L0.32 2.58 L-0.07 1.80 L-0.57 1.71 L-1.21 2.30 L-1.82 1.86 L-1.45 1.07 L-1.69 0.62 L-2.55 0.48 L-2.59 -0.26 L-1.74 -0.47 L-1.54 -0.94 L-1.97 -1.70 L-1.41 -2.18 L-0.72 -1.65 L-0.22 -1.79 L0.10 -2.60 L0.83 -2.46 L0.84 -1.59 L1.26 -1.29 L2.09 -1.54 L2.44 -0.89 L1.77 -0.34 Z" fill="#a660b3"/></g>
<g transform="matrix(0.7 -0.5 0 1 24 14.3)"><path d="M1.79 0.18 L2.51 0.67 L2.22 1.36 L1.36 1.17 L0.98 1.51 L1.04 2.38 L0.32 2.58 L-0.07 1.80 L-0.57 1.71 L-1.21 2.30 L-1.82 1.86 L-1.45 1.07 L-1.69 0.62 L-2.55 0.48 L-2.59 -0.26 L-1.74 -0.47 L-1.54 -0.94 L-1.97 -1.70 L-1.41 -2.18 L-0.72 -1.65 L-0.22 -1.79 L0.10 -2.60 L0.83 -2.46 L0.84 -1.59 L1.26 -1.29 L2.09 -1.54 L2.44 -0.89 L1.77 -0.34 Z" fill="#6a6a6a"/><circle r="0.7" fill="#ddd"/></g>
<g transform="matrix(0.85 -0.5 0 1 21.3 19.7)"><path d="M1.79 0.18 L2.51 0.67 L2.22 1.36 L1.36 1.17 L0.98 1.51 L1.04 2.38 L0.32 2.58 L-0.07 1.80 L-0.57 1.71 L-1.21 2.30 L-1.82 1.86 L-1.45 1.07 L-1.69 0.62 L-2.55 0.48 L-2.59 -0.26 L-1.74 -0.47 L-1.54 -0.94 L-1.97 -1.70 L-1.41 -2.18 L-0.72 -1.65 L-0.22 -1.79 L0.10 -2.60 L0.83 -2.46 L0.84 -1.59 L1.26 -1.29 L2.09 -1.54 L2.44 -0.89 L1.77 -0.34 Z" fill="#3aae35"/><circle r="0.6" fill="#bfe6bd"/></g>
<g transform="matrix(0.65 -0.5 0 1 17.4 21.6)"><path d="M1.79 0.18 L2.51 0.67 L2.22 1.36 L1.36 1.17 L0.98 1.51 L1.04 2.38 L0.32 2.58 L-0.07 1.80 L-0.57 1.71 L-1.21 2.30 L-1.82 1.86 L-1.45 1.07 L-1.69 0.62 L-2.55 0.48 L-2.59 -0.26 L-1.74 -0.47 L-1.54 -0.94 L-1.97 -1.70 L-1.41 -2.18 L-0.72 -1.65 L-0.22 -1.79 L0.10 -2.60 L0.83 -2.46 L0.84 -1.59 L1.26 -1.29 L2.09 -1.54 L2.44 -0.89 L1.77 -0.34 Z" fill="#555"/><circle r="0.7" fill="#ddd"/></g>
</svg>
<span class="t" id="t6" style="top:160.68px;font-size:24px;color:#262626;letter-spacing:0.319px;left:34.6px;">HTML</span>
<svg class="ab" style="left:308px;top:167px" width="13" height="15" viewBox="0 0 13 15"><path d="M1 1.4 L11.2 7.5 L1 13.6 Z" fill="#262626" stroke="#262626" stroke-width="1" stroke-linejoin="round"/></svg>
<svg class="ab" style="left:0px;top:191px" width="29" height="30" viewBox="0 0 29 30">
<path d="M14 0.6 L27.8 5.8 L27.2 19 L14 29.2 L1.4 19 L0.9 5.8 Z" fill="#f6f6f6" stroke="#d6d6d6" stroke-width="0.9" stroke-linejoin="round"/>
<path d="M14 12.6 L27.8 5.8 L27.2 19 L14 29.2 Z" fill="#fcfcfc"/>
<path d="M14 12.6 L0.9 5.8 L1.4 19 L14 29.2 Z" fill="#f3f3f3"/>
<path d="M0.9 5.8 L14 12.6 L27.8 5.8 M14 12.6 L14 29.2" fill="none" stroke="#dedede" stroke-width="0.8"/>
<ellipse cx="7.2" cy="5.6" rx="4.6" ry="2.5" fill="#e9e9e9" stroke="#d5d5d5" stroke-width="0.6"/>
<ellipse cx="20.8" cy="5.6" rx="4.6" ry="2.5" fill="#e9e9e9" stroke="#d5d5d5" stroke-width="0.6"/>
<ellipse cx="14" cy="3.2" rx="4.6" ry="2.4" fill="#ececec" stroke="#d5d5d5" stroke-width="0.6"/>
<ellipse cx="14" cy="9" rx="4.8" ry="2.7" fill="#e4e4e4" stroke="#cfcfcf" stroke-width="0.7"/>
<ellipse cx="14" cy="8" rx="4.2" ry="2.1" fill="#f0f0f0"/>
<g transform="matrix(0.86 0.5 0 1 7.5 17.2)"><path d="M3.43 0.70 L4.71 1.67 L4.15 2.79 L2.60 2.34 L1.93 2.92 L2.15 4.52 L0.96 4.91 L0.18 3.50 L-0.70 3.43 L-1.67 4.71 L-2.79 4.15 L-2.34 2.60 L-2.92 1.93 L-4.52 2.15 L-4.91 0.96 L-3.50 0.18 L-3.43 -0.70 L-4.71 -1.67 L-4.15 -2.79 L-2.60 -2.34 L-1.93 -2.92 L-2.15 -4.52 L-0.96 -4.91 L-0.18 -3.50 L0.70 -3.43 L1.67 -4.71 L2.79 -4.15 L2.34 -2.60 L2.92 -1.93 L4.52 -2.15 L4.91 -0.96 L3.50 -0.18 Z" fill="#a35bb0"/><ellipse cx="0" cy="0" rx="1.3" ry="1.9" fill="#f3ecf5"/></g>
<g transform="matrix(0.8 -0.5 0 1 20.7 13.3)"><path d="M1.79 0.18 L2.51 0.67 L2.22 1.36 L1.36 1.17 L0.98 1.51 L1.04 2.38 L0.32 2.58 L-0.07 1.80 L-0.57 1.71 L-1.21 2.30 L-1.82 1.86 L-1.45 1.07 L-1.69 0.62 L-2.55 0.48 L-2.59 -0.26 L-1.74 -0.47 L-1.54 -0.94 L-1.97 -1.70 L-1.41 -2.18 L-0.72 -1.65 L-0.22 -1.79 L0.10 -2.60 L0.83 -2.46 L0.84 -1.59 L1.26 -1.29 L2.09 -1.54 L2.44 -0.89 L1.77 -0.34 Z" fill="#a660b3"/></g>
<g transform="matrix(0.7 -0.5 0 1 24 14.3)"><path d="M1.79 0.18 L2.51 0.67 L2.22 1.36 L1.36 1.17 L0.98 1.51 L1.04 2.38 L0.32 2.58 L-0.07 1.80 L-0.57 1.71 L-1.21 2.30 L-1.82 1.86 L-1.45 1.07 L-1.69 0.62 L-2.55 0.48 L-2.59 -0.26 L-1.74 -0.47 L-1.54 -0.94 L-1.97 -1.70 L-1.41 -2.18 L-0.72 -1.65 L-0.22 -1.79 L0.10 -2.60 L0.83 -2.46 L0.84 -1.59 L1.26 -1.29 L2.09 -1.54 L2.44 -0.89 L1.77 -0.34 Z" fill="#6a6a6a"/><circle r="0.7" fill="#ddd"/></g>
<g transform="matrix(0.85 -0.5 0 1 21.3 19.7)"><path d="M1.79 0.18 L2.51 0.67 L2.22 1.36 L1.36 1.17 L0.98 1.51 L1.04 2.38 L0.32 2.58 L-0.07 1.80 L-0.57 1.71 L-1.21 2.30 L-1.82 1.86 L-1.45 1.07 L-1.69 0.62 L-2.55 0.48 L-2.59 -0.26 L-1.74 -0.47 L-1.54 -0.94 L-1.97 -1.70 L-1.41 -2.18 L-0.72 -1.65 L-0.22 -1.79 L0.10 -2.60 L0.83 -2.46 L0.84 -1.59 L1.26 -1.29 L2.09 -1.54 L2.44 -0.89 L1.77 -0.34 Z" fill="#3aae35"/><circle r="0.6" fill="#bfe6bd"/></g>
<g transform="matrix(0.65 -0.5 0 1 17.4 21.6)"><path d="M1.79 0.18 L2.51 0.67 L2.22 1.36 L1.36 1.17 L0.98 1.51 L1.04 2.38 L0.32 2.58 L-0.07 1.80 L-0.57 1.71 L-1.21 2.30 L-1.82 1.86 L-1.45 1.07 L-1.69 0.62 L-2.55 0.48 L-2.59 -0.26 L-1.74 -0.47 L-1.54 -0.94 L-1.97 -1.70 L-1.41 -2.18 L-0.72 -1.65 L-0.22 -1.79 L0.10 -2.60 L0.83 -2.46 L0.84 -1.59 L1.26 -1.29 L2.09 -1.54 L2.44 -0.89 L1.77 -0.34 Z" fill="#555"/><circle r="0.7" fill="#ddd"/></g>
</svg>
<span class="t" id="t7" style="top:192.68px;font-size:24px;color:#262626;letter-spacing:0.706px;left:34.6px;">Hyperlink Helper</span>
<svg class="ab" style="left:308px;top:199px" width="13" height="15" viewBox="0 0 13 15"><path d="M1 1.4 L11.2 7.5 L1 13.6 Z" fill="#262626" stroke="#262626" stroke-width="1" stroke-linejoin="round"/></svg>
<svg class="ab" style="left:0px;top:223px" width="29" height="30" viewBox="0 0 29 30">
<path d="M14 0.6 L27.8 5.8 L27.2 19 L14 29.2 L1.4 19 L0.9 5.8 Z" fill="#f6f6f6" stroke="#d6d6d6" stroke-width="0.9" stroke-linejoin="round"/>
<path d="M14 12.6 L27.8 5.8 L27.2 19 L14 29.2 Z" fill="#fcfcfc"/>
<path d="M14 12.6 L0.9 5.8 L1.4 19 L14 29.2 Z" fill="#f3f3f3"/>
<path d="M0.9 5.8 L14 12.6 L27.8 5.8 M14 12.6 L14 29.2" fill="none" stroke="#dedede" stroke-width="0.8"/>
<ellipse cx="7.2" cy="5.6" rx="4.6" ry="2.5" fill="#e9e9e9" stroke="#d5d5d5" stroke-width="0.6"/>
<ellipse cx="20.8" cy="5.6" rx="4.6" ry="2.5" fill="#e9e9e9" stroke="#d5d5d5" stroke-width="0.6"/>
<ellipse cx="14" cy="3.2" rx="4.6" ry="2.4" fill="#ececec" stroke="#d5d5d5" stroke-width="0.6"/>
<ellipse cx="14" cy="9" rx="4.8" ry="2.7" fill="#e4e4e4" stroke="#cfcfcf" stroke-width="0.7"/>
<ellipse cx="14" cy="8" rx="4.2" ry="2.1" fill="#f0f0f0"/>
<g transform="matrix(0.86 0.5 0 1 7.5 17.2)"><path d="M3.43 0.70 L4.71 1.67 L4.15 2.79 L2.60 2.34 L1.93 2.92 L2.15 4.52 L0.96 4.91 L0.18 3.50 L-0.70 3.43 L-1.67 4.71 L-2.79 4.15 L-2.34 2.60 L-2.92 1.93 L-4.52 2.15 L-4.91 0.96 L-3.50 0.18 L-3.43 -0.70 L-4.71 -1.67 L-4.15 -2.79 L-2.60 -2.34 L-1.93 -2.92 L-2.15 -4.52 L-0.96 -4.91 L-0.18 -3.50 L0.70 -3.43 L1.67 -4.71 L2.79 -4.15 L2.34 -2.60 L2.92 -1.93 L4.52 -2.15 L4.91 -0.96 L3.50 -0.18 Z" fill="#a35bb0"/><ellipse cx="0" cy="0" rx="1.3" ry="1.9" fill="#f3ecf5"/></g>
<g transform="matrix(0.8 -0.5 0 1 20.7 13.3)"><path d="M1.79 0.18 L2.51 0.67 L2.22 1.36 L1.36 1.17 L0.98 1.51 L1.04 2.38 L0.32 2.58 L-0.07 1.80 L-0.57 1.71 L-1.21 2.30 L-1.82 1.86 L-1.45 1.07 L-1.69 0.62 L-2.55 0.48 L-2.59 -0.26 L-1.74 -0.47 L-1.54 -0.94 L-1.97 -1.70 L-1.41 -2.18 L-0.72 -1.65 L-0.22 -1.79 L0.10 -2.60 L0.83 -2.46 L0.84 -1.59 L1.26 -1.29 L2.09 -1.54 L2.44 -0.89 L1.77 -0.34 Z" fill="#a660b3"/></g>
<g transform="matrix(0.7 -0.5 0 1 24 14.3)"><path d="M1.79 0.18 L2.51 0.67 L2.22 1.36 L1.36 1.17 L0.98 1.51 L1.04 2.38 L0.32 2.58 L-0.07 1.80 L-0.57 1.71 L-1.21 2.30 L-1.82 1.86 L-1.45 1.07 L-1.69 0.62 L-2.55 0.48 L-2.59 -0.26 L-1.74 -0.47 L-1.54 -0.94 L-1.97 -1.70 L-1.41 -2.18 L-0.72 -1.65 L-0.22 -1.79 L0.10 -2.60 L0.83 -2.46 L0.84 -1.59 L1.26 -1.29 L2.09 -1.54 L2.44 -0.89 L1.77 -0.34 Z" fill="#6a6a6a"/><circle r="0.7" fill="#ddd"/></g>
<g transform="matrix(0.85 -0.5 0 1 21.3 19.7)"><path d="M1.79 0.18 L2.51 0.67 L2.22 1.36 L1.36 1.17 L0.98 1.51 L1.04 2.38 L0.32 2.58 L-0.07 1.80 L-0.57 1.71 L-1.21 2.30 L-1.82 1.86 L-1.45 1.07 L-1.69 0.62 L-2.55 0.48 L-2.59 -0.26 L-1.74 -0.47 L-1.54 -0.94 L-1.97 -1.70 L-1.41 -2.18 L-0.72 -1.65 L-0.22 -1.79 L0.10 -2.60 L0.83 -2.46 L0.84 -1.59 L1.26 -1.29 L2.09 -1.54 L2.44 -0.89 L1.77 -0.34 Z" fill="#3aae35"/><circle r="0.6" fill="#bfe6bd"/></g>
<g transform="matrix(0.65 -0.5 0 1 17.4 21.6)"><path d="M1.79 0.18 L2.51 0.67 L2.22 1.36 L1.36 1.17 L0.98 1.51 L1.04 2.38 L0.32 2.58 L-0.07 1.80 L-0.57 1.71 L-1.21 2.30 L-1.82 1.86 L-1.45 1.07 L-1.69 0.62 L-2.55 0.48 L-2.59 -0.26 L-1.74 -0.47 L-1.54 -0.94 L-1.97 -1.70 L-1.41 -2.18 L-0.72 -1.65 L-0.22 -1.79 L0.10 -2.60 L0.83 -2.46 L0.84 -1.59 L1.26 -1.29 L2.09 -1.54 L2.44 -0.89 L1.77 -0.34 Z" fill="#555"/><circle r="0.7" fill="#ddd"/></g>
</svg>
<span class="t" id="t8" style="top:224.68px;font-size:24px;color:#262626;letter-spacing:0.517px;left:34.6px;">JavaScript</span>
<svg class="ab" style="left:308px;top:231px" width="13" height="15" viewBox="0 0 13 15"><path d="M1 1.4 L11.2 7.5 L1 13.6 Z" fill="#262626" stroke="#262626" stroke-width="1" stroke-linejoin="round"/></svg>
<svg class="ab" style="left:0px;top:255px" width="29" height="30" viewBox="0 0 29 30">
<path d="M14 0.6 L27.8 5.8 L27.2 19 L14 29.2 L1.4 19 L0.9 5.8 Z" fill="#f6f6f6" stroke="#d6d6d6" stroke-width="0.9" stroke-linejoin="round"/>
<path d="M14 12.6 L27.8 5.8 L27.2 19 L14 29.2 Z" fill="#fcfcfc"/>
<path d="M14 12.6 L0.9 5.8 L1.4 19 L14 29.2 Z" fill="#f3f3f3"/>
<path d="M0.9 5.8 L14 12.6 L27.8 5.8 M14 12.6 L14 29.2" fill="none" stroke="#dedede" stroke-width="0.8"/>
<ellipse cx="7.2" cy="5.6" rx="4.6" ry="2.5" fill="#e9e9e9" stroke="#d5d5d5" stroke-width="0.6"/>
<ellipse cx="20.8" cy="5.6" rx="4.6" ry="2.5" fill="#e9e9e9" stroke="#d5d5d5" stroke-width="0.6"/>
<ellipse cx="14" cy="3.2" rx="4.6" ry="2.4" fill="#ececec" stroke="#d5d5d5" stroke-width="0.6"/>
<ellipse cx="14" cy="9" rx="4.8" ry="2.7" fill="#e4e4e4" stroke="#cfcfcf" stroke-width="0.7"/>
<ellipse cx="14" cy="8" rx="4.2" ry="2.1" fill="#f0f0f0"/>
<g transform="matrix(0.86 0.5 0 1 7.5 17.2)"><path d="M3.43 0.70 L4.71 1.67 L4.15 2.79 L2.60 2.34 L1.93 2.92 L2.15 4.52 L0.96 4.91 L0.18 3.50 L-0.70 3.43 L-1.67 4.71 L-2.79 4.15 L-2.34 2.60 L-2.92 1.93 L-4.52 2.15 L-4.91 0.96 L-3.50 0.18 L-3.43 -0.70 L-4.71 -1.67 L-4.15 -2.79 L-2.60 -2.34 L-1.93 -2.92 L-2.15 -4.52 L-0.96 -4.91 L-0.18 -3.50 L0.70 -3.43 L1.67 -4.71 L2.79 -4.15 L2.34 -2.60 L2.92 -1.93 L4.52 -2.15 L4.91 -0.96 L3.50 -0.18 Z" fill="#a35bb0"/><ellipse cx="0" cy="0" rx="1.3" ry="1.9" fill="#f3ecf5"/></g>
<g transform="matrix(0.8 -0.5 0 1 20.7 13.3)"><path d="M1.79 0.18 L2.51 0.67 L2.22 1.36 L1.36 1.17 L0.98 1.51 L1.04 2.38 L0.32 2.58 L-0.07 1.80 L-0.57 1.71 L-1.21 2.30 L-1.82 1.86 L-1.45 1.07 L-1.69 0.62 L-2.55 0.48 L-2.59 -0.26 L-1.74 -0.47 L-1.54 -0.94 L-1.97 -1.70 L-1.41 -2.18 L-0.72 -1.65 L-0.22 -1.79 L0.10 -2.60 L0.83 -2.46 L0.84 -1.59 L1.26 -1.29 L2.09 -1.54 L2.44 -0.89 L1.77 -0.34 Z" fill="#a660b3"/></g>
<g transform="matrix(0.7 -0.5 0 1 24 14.3)"><path d="M1.79 0.18 L2.51 0.67 L2.22 1.36 L1.36 1.17 L0.98 1.51 L1.04 2.38 L0.32 2.58 L-0.07 1.80 L-0.57 1.71 L-1.21 2.30 L-1.82 1.86 L-1.45 1.07 L-1.69 0.62 L-2.55 0.48 L-2.59 -0.26 L-1.74 -0.47 L-1.54 -0.94 L-1.97 -1.70 L-1.41 -2.18 L-0.72 -1.65 L-0.22 -1.79 L0.10 -2.60 L0.83 -2.46 L0.84 -1.59 L1.26 -1.29 L2.09 -1.54 L2.44 -0.89 L1.77 -0.34 Z" fill="#6a6a6a"/><circle r="0.7" fill="#ddd"/></g>
<g transform="matrix(0.85 -0.5 0 1 21.3 19.7)"><path d="M1.79 0.18 L2.51 0.67 L2.22 1.36 L1.36 1.17 L0.98 1.51 L1.04 2.38 L0.32 2.58 L-0.07 1.80 L-0.57 1.71 L-1.21 2.30 L-1.82 1.86 L-1.45 1.07 L-1.69 0.62 L-2.55 0.48 L-2.59 -0.26 L-1.74 -0.47 L-1.54 -0.94 L-1.97 -1.70 L-1.41 -2.18 L-0.72 -1.65 L-0.22 -1.79 L0.10 -2.60 L0.83 -2.46 L0.84 -1.59 L1.26 -1.29 L2.09 -1.54 L2.44 -0.89 L1.77 -0.34 Z" fill="#3aae35"/><circle r="0.6" fill="#bfe6bd"/></g>
<g transform="matrix(0.65 -0.5 0 1 17.4 21.6)"><path d="M1.79 0.18 L2.51 0.67 L2.22 1.36 L1.36 1.17 L0.98 1.51 L1.04 2.38 L0.32 2.58 L-0.07 1.80 L-0.57 1.71 L-1.21 2.30 L-1.82 1.86 L-1.45 1.07 L-1.69 0.62 L-2.55 0.48 L-2.59 -0.26 L-1.74 -0.47 L-1.54 -0.94 L-1.97 -1.70 L-1.41 -2.18 L-0.72 -1.65 L-0.22 -1.79 L0.10 -2.60 L0.83 -2.46 L0.84 -1.59 L1.26 -1.29 L2.09 -1.54 L2.44 -0.89 L1.77 -0.34 Z" fill="#555"/><circle r="0.7" fill="#ddd"/></g>
</svg>
<span class="t" id="t9" style="top:256.68px;font-size:24px;color:#262626;letter-spacing:-0.405px;left:34.6px;">JSON</span>
<svg class="ab" style="left:308px;top:263px" width="13" height="15" viewBox="0 0 13 15"><path d="M1 1.4 L11.2 7.5 L1 13.6 Z" fill="#262626" stroke="#262626" stroke-width="1" stroke-linejoin="round"/></svg>
<svg class="ab" style="left:0px;top:287px" width="29" height="30" viewBox="0 0 29 30">
<path d="M14 0.6 L27.8 5.8 L27.2 19 L14 29.2 L1.4 19 L0.9 5.8 Z" fill="#f6f6f6" stroke="#d6d6d6" stroke-width="0.9" stroke-linejoin="round"/>
<path d="M14 12.6 L27.8 5.8 L27.2 19 L14 29.2 Z" fill="#fcfcfc"/>
<path d="M14 12.6 L0.9 5.8 L1.4 19 L14 29.2 Z" fill="#f3f3f3"/>
<path d="M0.9 5.8 L14 12.6 L27.8 5.8 M14 12.6 L14 29.2" fill="none" stroke="#dedede" stroke-width="0.8"/>
<ellipse cx="7.2" cy="5.6" rx="4.6" ry="2.5" fill="#e9e9e9" stroke="#d5d5d5" stroke-width="0.6"/>
<ellipse cx="20.8" cy="5.6" rx="4.6" ry="2.5" fill="#e9e9e9" stroke="#d5d5d5" stroke-width="0.6"/>
<ellipse cx="14" cy="3.2" rx="4.6" ry="2.4" fill="#ececec" stroke="#d5d5d5" stroke-width="0.6"/>
<ellipse cx="14" cy="9" rx="4.8" ry="2.7" fill="#e4e4e4" stroke="#cfcfcf" stroke-width="0.7"/>
<ellipse cx="14" cy="8" rx="4.2" ry="2.1" fill="#f0f0f0"/>
<g transform="matrix(0.86 0.5 0 1 7.5 17.2)"><path d="M3.43 0.70 L4.71 1.67 L4.15 2.79 L2.60 2.34 L1.93 2.92 L2.15 4.52 L0.96 4.91 L0.18 3.50 L-0.70 3.43 L-1.67 4.71 L-2.79 4.15 L-2.34 2.60 L-2.92 1.93 L-4.52 2.15 L-4.91 0.96 L-3.50 0.18 L-3.43 -0.70 L-4.71 -1.67 L-4.15 -2.79 L-2.60 -2.34 L-1.93 -2.92 L-2.15 -4.52 L-0.96 -4.91 L-0.18 -3.50 L0.70 -3.43 L1.67 -4.71 L2.79 -4.15 L2.34 -2.60 L2.92 -1.93 L4.52 -2.15 L4.91 -0.96 L3.50 -0.18 Z" fill="#a35bb0"/><ellipse cx="0" cy="0" rx="1.3" ry="1.9" fill="#f3ecf5"/></g>
<g transform="matrix(0.8 -0.5 0 1 20.7 13.3)"><path d="M1.79 0.18 L2.51 0.67 L2.22 1.36 L1.36 1.17 L0.98 1.51 L1.04 2.38 L0.32 2.58 L-0.07 1.80 L-0.57 1.71 L-1.21 2.30 L-1.82 1.86 L-1.45 1.07 L-1.69 0.62 L-2.55 0.48 L-2.59 -0.26 L-1.74 -0.47 L-1.54 -0.94 L-1.97 -1.70 L-1.41 -2.18 L-0.72 -1.65 L-0.22 -1.79 L0.10 -2.60 L0.83 -2.46 L0.84 -1.59 L1.26 -1.29 L2.09 -1.54 L2.44 -0.89 L1.77 -0.34 Z" fill="#a660b3"/></g>
<g transform="matrix(0.7 -0.5 0 1 24 14.3)"><path d="M1.79 0.18 L2.51 0.67 L2.22 1.36 L1.36 1.17 L0.98 1.51 L1.04 2.38 L0.32 2.58 L-0.07 1.80 L-0.57 1.71 L-1.21 2.30 L-1.82 1.86 L-1.45 1.07 L-1.69 0.62 L-2.55 0.48 L-2.59 -0.26 L-1.74 -0.47 L-1.54 -0.94 L-1.97 -1.70 L-1.41 -2.18 L-0.72 -1.65 L-0.22 -1.79 L0.10 -2.60 L0.83 -2.46 L0.84 -1.59 L1.26 -1.29 L2.09 -1.54 L2.44 -0.89 L1.77 -0.34 Z" fill="#6a6a6a"/><circle r="0.7" fill="#ddd"/></g>
<g transform="matrix(0.85 -0.5 0 1 21.3 19.7)"><path d="M1.79 0.18 L2.51 0.67 L2.22 1.36 L1.36 1.17 L0.98 1.51 L1.04 2.38 L0.32 2.58 L-0.07 1.80 L-0.57 1.71 L-1.21 2.30 L-1.82 1.86 L-1.45 1.07 L-1.69 0.62 L-2.55 0.48 L-2.59 -0.26 L-1.74 -0.47 L-1.54 -0.94 L-1.97 -1.70 L-1.41 -2.18 L-0.72 -1.65 L-0.22 -1.79 L0.10 -2.60 L0.83 -2.46 L0.84 -1.59 L1.26 -1.29 L2.09 -1.54 L2.44 -0.89 L1.77 -0.34 Z" fill="#3aae35"/><circle r="0.6" fill="#bfe6bd"/></g>
<g transform="matrix(0.65 -0.5 0 1 17.4 21.6)"><path d="M1.79 0.18 L2.51 0.67 L2.22 1.36 L1.36 1.17 L0.98 1.51 L1.04 2.38 L0.32 2.58 L-0.07 1.80 L-0.57 1.71 L-1.21 2.30 L-1.82 1.86 L-1.45 1.07 L-1.69 0.62 L-2.55 0.48 L-2.59 -0.26 L-1.74 -0.47 L-1.54 -0.94 L-1.97 -1.70 L-1.41 -2.18 L-0.72 -1.65 L-0.22 -1.79 L0.10 -2.60 L0.83 -2.46 L0.84 -1.59 L1.26 -1.29 L2.09 -1.54 L2.44 -0.89 L1.77 -0.34 Z" fill="#555"/><circle r="0.7" fill="#ddd"/></g>
</svg>
<span class="t" id="t10" style="top:288.68px;font-size:24px;color:#262626;letter-spacing:0.361px;left:34.6px;">Mail</span>
<svg class="ab" style="left:308px;top:295px" width="13" height="15" viewBox="0 0 13 15"><path d="M1 1.4 L11.2 7.5 L1 13.6 Z" fill="#262626" stroke="#262626" stroke-width="1" stroke-linejoin="round"/></svg>
<svg class="ab" style="left:0px;top:319px" width="29" height="30" viewBox="0 0 29 30">
<path d="M14 0.6 L27.8 5.8 L27.2 19 L14 29.2 L1.4 19 L0.9 5.8 Z" fill="#f6f6f6" stroke="#d6d6d6" stroke-width="0.9" stroke-linejoin="round"/>
<path d="M14 12.6 L27.8 5.8 L27.2 19 L14 29.2 Z" fill="#fcfcfc"/>
<path d="M14 12.6 L0.9 5.8 L1.4 19 L14 29.2 Z" fill="#f3f3f3"/>
<path d="M0.9 5.8 L14 12.6 L27.8 5.8 M14 12.6 L14 29.2" fill="none" stroke="#dedede" stroke-width="0.8"/>
<ellipse cx="7.2" cy="5.6" rx="4.6" ry="2.5" fill="#e9e9e9" stroke="#d5d5d5" stroke-width="0.6"/>
<ellipse cx="20.8" cy="5.6" rx="4.6" ry="2.5" fill="#e9e9e9" stroke="#d5d5d5" stroke-width="0.6"/>
<ellipse cx="14" cy="3.2" rx="4.6" ry="2.4" fill="#ececec" stroke="#d5d5d5" stroke-width="0.6"/>
<ellipse cx="14" cy="9" rx="4.8" ry="2.7" fill="#e4e4e4" stroke="#cfcfcf" stroke-width="0.7"/>
<ellipse cx="14" cy="8" rx="4.2" ry="2.1" fill="#f0f0f0"/>
<g transform="matrix(0.86 0.5 0 1 7.5 17.2)"><path d="M3.43 0.70 L4.71 1.67 L4.15 2.79 L2.60 2.34 L1.93 2.92 L2.15 4.52 L0.96 4.91 L0.18 3.50 L-0.70 3.43 L-1.67 4.71 L-2.79 4.15 L-2.34 2.60 L-2.92 1.93 L-4.52 2.15 L-4.91 0.96 L-3.50 0.18 L-3.43 -0.70 L-4.71 -1.67 L-4.15 -2.79 L-2.60 -2.34 L-1.93 -2.92 L-2.15 -4.52 L-0.96 -4.91 L-0.18 -3.50 L0.70 -3.43 L1.67 -4.71 L2.79 -4.15 L2.34 -2.60 L2.92 -1.93 L4.52 -2.15 L4.91 -0.96 L3.50 -0.18 Z" fill="#a35bb0"/><ellipse cx="0" cy="0" rx="1.3" ry="1.9" fill="#f3ecf5"/></g>
<g transform="matrix(0.8 -0.5 0 1 20.7 13.3)"><path d="M1.79 0.18 L2.51 0.67 L2.22 1.36 L1.36 1.17 L0.98 1.51 L1.04 2.38 L0.32 2.58 L-0.07 1.80 L-0.57 1.71 L-1.21 2.30 L-1.82 1.86 L-1.45 1.07 L-1.69 0.62 L-2.55 0.48 L-2.59 -0.26 L-1.74 -0.47 L-1.54 -0.94 L-1.97 -1.70 L-1.41 -2.18 L-0.72 -1.65 L-0.22 -1.79 L0.10 -2.60 L0.83 -2.46 L0.84 -1.59 L1.26 -1.29 L2.09 -1.54 L2.44 -0.89 L1.77 -0.34 Z" fill="#a660b3"/></g>
<g transform="matrix(0.7 -0.5 0 1 24 14.3)"><path d="M1.79 0.18 L2.51 0.67 L2.22 1.36 L1.36 1.17 L0.98 1.51 L1.04 2.38 L0.32 2.58 L-0.07 1.80 L-0.57 1.71 L-1.21 2.30 L-1.82 1.86 L-1.45 1.07 L-1.69 0.62 L-2.55 0.48 L-2.59 -0.26 L-1.74 -0.47 L-1.54 -0.94 L-1.97 -1.70 L-1.41 -2.18 L-0.72 -1.65 L-0.22 -1.79 L0.10 -2.60 L0.83 -2.46 L0.84 -1.59 L1.26 -1.29 L2.09 -1.54 L2.44 -0.89 L1.77 -0.34 Z" fill="#6a6a6a"/><circle r="0.7" fill="#ddd"/></g>
<g transform="matrix(0.85 -0.5 0 1 21.3 19.7)"><path d="M1.79 0.18 L2.51 0.67 L2.22 1.36 L1.36 1.17 L0.98 1.51 L1.04 2.38 L0.32 2.58 L-0.07 1.80 L-0.57 1.71 L-1.21 2.30 L-1.82 1.86 L-1.45 1.07 L-1.69 0.62 L-2.55 0.48 L-2.59 -0.26 L-1.74 -0.47 L-1.54 -0.94 L-1.97 -1.70 L-1.41 -2.18 L-0.72 -1.65 L-0.22 -1.79 L0.10 -2.60 L0.83 -2.46 L0.84 -1.59 L1.26 -1.29 L2.09 -1.54 L2.44 -0.89 L1.77 -0.34 Z" fill="#3aae35"/><circle r="0.6" fill="#bfe6bd"/></g>
<g transform="matrix(0.65 -0.5 0 1 17.4 21.6)"><path d="M1.79 0.18 L2.51 0.67 L2.22 1.36 L1.36 1.17 L0.98 1.51 L1.04 2.38 L0.32 2.58 L-0.07 1.80 L-0.57 1.71 L-1.21 2.30 L-1.82 1.86 L-1.45 1.07 L-1.69 0.62 L-2.55 0.48 L-2.59 -0.26 L-1.74 -0.47 L-1.54 -0.94 L-1.97 -1.70 L-1.41 -2.18 L-0.72 -1.65 L-0.22 -1.79 L0.10 -2.60 L0.83 -2.46 L0.84 -1.59 L1.26 -1.29 L2.09 -1.54 L2.44 -0.89 L1.77 -0.34 Z" fill="#555"/><circle r="0.7" fill="#ddd"/></g>
</svg>
<span class="t" id="t11" style="top:320.68px;font-size:24px;color:#262626;letter-spacing:0.104px;left:34.6px;">Make</span>
<svg class="ab" style="left:308px;top:327px" width="13" height="15" viewBox="0 0 13 15"><path d="M1 1.4 L11.2 7.5 L1 13.6 Z" fill="#262626" stroke="#262626" stroke-width="1" stroke-linejoin="round"/></svg>
<svg class="ab" style="left:0px;top:351px" width="29" height="30" viewBox="0 0 29 30">
<path d="M14 0.6 L27.8 5.8 L27.2 19 L14 29.2 L1.4 19 L0.9 5.8 Z" fill="#f6f6f6" stroke="#d6d6d6" stroke-width="0.9" stroke-linejoin="round"/>
<path d="M14 12.6 L27.8 5.8 L27.2 19 L14 29.2 Z" fill="#fcfcfc"/>
<path d="M14 12.6 L0.9 5.8 L1.4 19 L14 29.2 Z" fill="#f3f3f3"/>
<path d="M0.9 5.8 L14 12.6 L27.8 5.8 M14 12.6 L14 29.2" fill="none" stroke="#dedede" stroke-width="0.8"/>
<ellipse cx="7.2" cy="5.6" rx="4.6" ry="2.5" fill="#e9e9e9" stroke="#d5d5d5" stroke-width="0.6"/>
<ellipse cx="20.8" cy="5.6" rx="4.6" ry="2.5" fill="#e9e9e9" stroke="#d5d5d5" stroke-width="0.6"/>
<ellipse cx="14" cy="3.2" rx="4.6" ry="2.4" fill="#ececec" stroke="#d5d5d5" stroke-width="0.6"/>
<ellipse cx="14" cy="9" rx="4.8" ry="2.7" fill="#e4e4e4" stroke="#cfcfcf" stroke-width="0.7"/>
<ellipse cx="14" cy="8" rx="4.2" ry="2.1" fill="#f0f0f0"/>
<g transform="matrix(0.86 0.5 0 1 7.5 17.2)"><path d="M3.43 0.70 L4.71 1.67 L4.15 2.79 L2.60 2.34 L1.93 2.92 L2.15 4.52 L0.96 4.91 L0.18 3.50 L-0.70 3.43 L-1.67 4.71 L-2.79 4.15 L-2.34 2.60 L-2.92 1.93 L-4.52 2.15 L-4.91 0.96 L-3.50 0.18 L-3.43 -0.70 L-4.71 -1.67 L-4.15 -2.79 L-2.60 -2.34 L-1.93 -2.92 L-2.15 -4.52 L-0.96 -4.91 L-0.18 -3.50 L0.70 -3.43 L1.67 -4.71 L2.79 -4.15 L2.34 -2.60 L2.92 -1.93 L4.52 -2.15 L4.91 -0.96 L3.50 -0.18 Z" fill="#a35bb0"/><ellipse cx="0" cy="0" rx="1.3" ry="1.9" fill="#f3ecf5"/></g>
<g transform="matrix(0.8 -0.5 0 1 20.7 13.3)"><path d="M1.79 0.18 L2.51 0.67 L2.22 1.36 L1.36 1.17 L0.98 1.51 L1.04 2.38 L0.32 2.58 L-0.07 1.80 L-0.57 1.71 L-1.21 2.30 L-1.82 1.86 L-1.45 1.07 L-1.69 0.62 L-2.55 0.48 L-2.59 -0.26 L-1.74 -0.47 L-1.54 -0.94 L-1.97 -1.70 L-1.41 -2.18 L-0.72 -1.65 L-0.22 -1.79 L0.10 -2.60 L0.83 -2.46 L0.84 -1.59 L1.26 -1.29 L2.09 -1.54 L2.44 -0.89 L1.77 -0.34 Z" fill="#a660b3"/></g>
<g transform="matrix(0.7 -0.5 0 1 24 14.3)"><path d="M1.79 0.18 L2.51 0.67 L2.22 1.36 L1.36 1.17 L0.98 1.51 L1.04 2.38 L0.32 2.58 L-0.07 1.80 L-0.57 1.71 L-1.21 2.30 L-1.82 1.86 L-1.45 1.07 L-1.69 0.62 L-2.55 0.48 L-2.59 -0.26 L-1.74 -0.47 L-1.54 -0.94 L-1.97 -1.70 L-1.41 -2.18 L-0.72 -1.65 L-0.22 -1.79 L0.10 -2.60 L0.83 -2.46 L0.84 -1.59 L1.26 -1.29 L2.09 -1.54 L2.44 -0.89 L1.77 -0.34 Z" fill="#6a6a6a"/><circle r="0.7" fill="#ddd"/></g>
<g transform="matrix(0.85 -0.5 0 1 21.3 19.7)"><path d="M1.79 0.18 L2.51 0.67 L2.22 1.36 L1.36 1.17 L0.98 1.51 L1.04 2.38 L0.32 2.58 L-0.07 1.80 L-0.57 1.71 L-1.21 2.30 L-1.82 1.86 L-1.45 1.07 L-1.69 0.62 L-2.55 0.48 L-2.59 -0.26 L-1.74 -0.47 L-1.54 -0.94 L-1.97 -1.70 L-1.41 -2.18 L-0.72 -1.65 L-0.22 -1.79 L0.10 -2.60 L0.83 -2.46 L0.84 -1.59 L1.26 -1.29 L2.09 -1.54 L2.44 -0.89 L1.77 -0.34 Z" fill="#3aae35"/><circle r="0.6" fill="#bfe6bd"/></g>
<g transform="matrix(0.65 -0.5 0 1 17.4 21.6)"><path d="M1.79 0.18 L2.51 0.67 L2.22 1.36 L1.36 1.17 L0.98 1.51 L1.04 2.38 L0.32 2.58 L-0.07 1.80 L-0.57 1.71 L-1.21 2.30 L-1.82 1.86 L-1.45 1.07 L-1.69 0.62 L-2.55 0.48 L-2.59 -0.26 L-1.74 -0.47 L-1.54 -0.94 L-1.97 -1.70 L-1.41 -2.18 L-0.72 -1.65 L-0.22 -1.79 L0.10 -2.60 L0.83 -2.46 L0.84 -1.59 L1.26 -1.29 L2.09 -1.54 L2.44 -0.89 L1.77 -0.34 Z" fill="#555"/><circle r="0.7" fill="#ddd"/></g>
</svg>
<span class="t" id="t12" style="top:352.68px;font-size:24px;color:#262626;letter-spacing:0.640px;left:34.6px;">Markdown</span>
<svg class="ab" style="left:308px;top:359px" width="13" height="15" viewBox="0 0 13 15"><path d="M1 1.4 L11.2 7.5 L1 13.6 Z" fill="#262626" stroke="#262626" stroke-width="1" stroke-linejoin="round"/></svg>
<svg class="ab" style="left:0px;top:383px" width="29" height="30" viewBox="0 0 29 30">
<path d="M14 0.6 L27.8 5.8 L27.2 19 L14 29.2 L1.4 19 L0.9 5.8 Z" fill="#f6f6f6" stroke="#d6d6d6" stroke-width="0.9" stroke-linejoin="round"/>
<path d="M14 12.6 L27.8 5.8 L27.2 19 L14 29.2 Z" fill="#fcfcfc"/>
<path d="M14 12.6 L0.9 5.8 L1.4 19 L14 29.2 Z" fill="#f3f3f3"/>
<path d="M0.9 5.8 L14 12.6 L27.8 5.8 M14 12.6 L14 29.2" fill="none" stroke="#dedede" stroke-width="0.8"/>
<ellipse cx="7.2" cy="5.6" rx="4.6" ry="2.5" fill="#e9e9e9" stroke="#d5d5d5" stroke-width="0.6"/>
<ellipse cx="20.8" cy="5.6" rx="4.6" ry="2.5" fill="#e9e9e9" stroke="#d5d5d5" stroke-width="0.6"/>
<ellipse cx="14" cy="3.2" rx="4.6" ry="2.4" fill="#ececec" stroke="#d5d5d5" stroke-width="0.6"/>
<ellipse cx="14" cy="9" rx="4.8" ry="2.7" fill="#e4e4e4" stroke="#cfcfcf" stroke-width="0.7"/>
<ellipse cx="14" cy="8" rx="4.2" ry="2.1" fill="#f0f0f0"/>
<g transform="matrix(0.86 0.5 0 1 7.5 17.2)"><path d="M3.43 0.70 L4.71 1.67 L4.15 2.79 L2.60 2.34 L1.93 2.92 L2.15 4.52 L0.96 4.91 L0.18 3.50 L-0.70 3.43 L-1.67 4.71 L-2.79 4.15 L-2.34 2.60 L-2.92 1.93 L-4.52 2.15 L-4.91 0.96 L-3.50 0.18 L-3.43 -0.70 L-4.71 -1.67 L-4.15 -2.79 L-2.60 -2.34 L-1.93 -2.92 L-2.15 -4.52 L-0.96 -4.91 L-0.18 -3.50 L0.70 -3.43 L1.67 -4.71 L2.79 -4.15 L2.34 -2.60 L2.92 -1.93 L4.52 -2.15 L4.91 -0.96 L3.50 -0.18 Z" fill="#a35bb0"/><ellipse cx="0" cy="0" rx="1.3" ry="1.9" fill="#f3ecf5"/></g>
<g transform="matrix(0.8 -0.5 0 1 20.7 13.3)"><path d="M1.79 0.18 L2.51 0.67 L2.22 1.36 L1.36 1.17 L0.98 1.51 L1.04 2.38 L0.32 2.58 L-0.07 1.80 L-0.57 1.71 L-1.21 2.30 L-1.82 1.86 L-1.45 1.07 L-1.69 0.62 L-2.55 0.48 L-2.59 -0.26 L-1.74 -0.47 L-1.54 -0.94 L-1.97 -1.70 L-1.41 -2.18 L-0.72 -1.65 L-0.22 -1.79 L0.10 -2.60 L0.83 -2.46 L0.84 -1.59 L1.26 -1.29 L2.09 -1.54 L2.44 -0.89 L1.77 -0.34 Z" fill="#a660b3"/></g>
<g transform="matrix(0.7 -0.5 0 1 24 14.3)"><path d="M1.79 0.18 L2.51 0.67 L2.22 1.36 L1.36 1.17 L0.98 1.51 L1.04 2.38 L0.32 2.58 L-0.07 1.80 L-0.57 1.71 L-1.21 2.30 L-1.82 1.86 L-1.45 1.07 L-1.69 0.62 L-2.55 0.48 L-2.59 -0.26 L-1.74 -0.47 L-1.54 -0.94 L-1.97 -1.70 L-1.41 -2.18 L-0.72 -1.65 L-0.22 -1.79 L0.10 -2.60 L0.83 -2.46 L0.84 -1.59 L1.26 -1.29 L2.09 -1.54 L2.44 -0.89 L1.77 -0.34 Z" fill="#6a6a6a"/><circle r="0.7" fill="#ddd"/></g>
<g transform="matrix(0.85 -0.5 0 1 21.3 19.7)"><path d="M1.79 0.18 L2.51 0.67 L2.22 1.36 L1.36 1.17 L0.98 1.51 L1.04 2.38 L0.32 2.58 L-0.07 1.80 L-0.57 1.71 L-1.21 2.30 L-1.82 1.86 L-1.45 1.07 L-1.69 0.62 L-2.55 0.48 L-2.59 -0.26 L-1.74 -0.47 L-1.54 -0.94 L-1.97 -1.70 L-1.41 -2.18 L-0.72 -1.65 L-0.22 -1.79 L0.10 -2.60 L0.83 -2.46 L0.84 -1.59 L1.26 -1.29 L2.09 -1.54 L2.44 -0.89 L1.77 -0.34 Z" fill="#3aae35"/><circle r="0.6" fill="#bfe6bd"/></g>
<g transform="matrix(0.65 -0.5 0 1 17.4 21.6)"><path d="M1.79 0.18 L2.51 0.67 L2.22 1.36 L1.36 1.17 L0.98 1.51 L1.04 2.38 L0.32 2.58 L-0.07 1.80 L-0.57 1.71 L-1.21 2.30 L-1.82 1.86 L-1.45 1.07 L-1.69 0.62 L-2.55 0.48 L-2.59 -0.26 L-1.74 -0.47 L-1.54 -0.94 L-1.97 -1.70 L-1.41 -2.18 L-0.72 -1.65 L-0.22 -1.79 L0.10 -2.60 L0.83 -2.46 L0.84 -1.59 L1.26 -1.29 L2.09 -1.54 L2.44 -0.89 L1.77 -0.34 Z" fill="#555"/><circle r="0.7" fill="#ddd"/></g>
</svg>
<span class="t" id="t13" style="top:384.68px;font-size:24px;color:#262626;letter-spacing:0.714px;left:34.6px;">Math</span>
<svg class="ab" style="left:308px;top:391px" width="13" height="15" viewBox="0 0 13 15"><path d="M1 1.4 L11.2 7.5 L1 13.6 Z" fill="#262626" stroke="#262626" stroke-width="1" stroke-linejoin="round"/></svg>
<svg class="ab" style="left:0px;top:415px" width="29" height="30" viewBox="0 0 29 30">
<path d="M14 0.6 L27.8 5.8 L27.2 19 L14 29.2 L1.4 19 L0.9 5.8 Z" fill="#f6f6f6" stroke="#d6d6d6" stroke-width="0.9" stroke-linejoin="round"/>
<path d="M14 12.6 L27.8 5.8 L27.2 19 L14 29.2 Z" fill="#fcfcfc"/>
<path d="M14 12.6 L0.9 5.8 L1.4 19 L14 29.2 Z" fill="#f3f3f3"/>
<path d="M0.9 5.8 L14 12.6 L27.8 5.8 M14 12.6 L14 29.2" fill="none" stroke="#dedede" stroke-width="0.8"/>
<ellipse cx="7.2" cy="5.6" rx="4.6" ry="2.5" fill="#e9e9e9" stroke="#d5d5d5" stroke-width="0.6"/>
<ellipse cx="20.8" cy="5.6" rx="4.6" ry="2.5" fill="#e9e9e9" stroke="#d5d5d5" stroke-width="0.6"/>
<ellipse cx="14" cy="3.2" rx="4.6" ry="2.4" fill="#ececec" stroke="#d5d5d5" stroke-width="0.6"/>
<ellipse cx="14" cy="9" rx="4.8" ry="2.7" fill="#e4e4e4" stroke="#cfcfcf" stroke-width="0.7"/>
<ellipse cx="14" cy="8" rx="4.2" ry="2.1" fill="#f0f0f0"/>
<g transform="matrix(0.86 0.5 0 1 7.5 17.2)"><path d="M3.43 0.70 L4.71 1.67 L4.15 2.79 L2.60 2.34 L1.93 2.92 L2.15 4.52 L0.96 4.91 L0.18 3.50 L-0.70 3.43 L-1.67 4.71 L-2.79 4.15 L-2.34 2.60 L-2.92 1.93 L-4.52 2.15 L-4.91 0.96 L-3.50 0.18 L-3.43 -0.70 L-4.71 -1.67 L-4.15 -2.79 L-2.60 -2.34 L-1.93 -2.92 L-2.15 -4.52 L-0.96 -4.91 L-0.18 -3.50 L0.70 -3.43 L1.67 -4.71 L2.79 -4.15 L2.34 -2.60 L2.92 -1.93 L4.52 -2.15 L4.91 -0.96 L3.50 -0.18 Z" fill="#a35bb0"/><ellipse cx="0" cy="0" rx="1.3" ry="1.9" fill="#f3ecf5"/></g>
<g transform="matrix(0.8 -0.5 0 1 20.7 13.3)"><path d="M1.79 0.18 L2.51 0.67 L2.22 1.36 L1.36 1.17 L0.98 1.51 L1.04 2.38 L0.32 2.58 L-0.07 1.80 L-0.57 1.71 L-1.21 2.30 L-1.82 1.86 L-1.45 1.07 L-1.69 0.62 L-2.55 0.48 L-2.59 -0.26 L-1.74 -0.47 L-1.54 -0.94 L-1.97 -1.70 L-1.41 -2.18 L-0.72 -1.65 L-0.22 -1.79 L0.10 -2.60 L0.83 -2.46 L0.84 -1.59 L1.26 -1.29 L2.09 -1.54 L2.44 -0.89 L1.77 -0.34 Z" fill="#a660b3"/></g>
<g transform="matrix(0.7 -0.5 0 1 24 14.3)"><path d="M1.79 0.18 L2.51 0.67 L2.22 1.36 L1.36 1.17 L0.98 1.51 L1.04 2.38 L0.32 2.58 L-0.07 1.80 L-0.57 1.71 L-1.21 2.30 L-1.82 1.86 L-1.45 1.07 L-1.69 0.62 L-2.55 0.48 L-2.59 -0.26 L-1.74 -0.47 L-1.54 -0.94 L-1.97 -1.70 L-1.41 -2.18 L-0.72 -1.65 L-0.22 -1.79 L0.10 -2.60 L0.83 -2.46 L0.84 -1.59 L1.26 -1.29 L2.09 -1.54 L2.44 -0.89 L1.77 -0.34 Z" fill="#6a6a6a"/><circle r="0.7" fill="#ddd"/></g>
<g transform="matrix(0.85 -0.5 0 1 21.3 19.7)"><path d="M1.79 0.18 L2.51 0.67 L2.22 1.36 L1.36 1.17 L0.98 1.51 L1.04 2.38 L0.32 2.58 L-0.07 1.80 L-0.57 1.71 L-1.21 2.30 L-1.82 1.86 L-1.45 1.07 L-1.69 0.62 L-2.55 0.48 L-2.59 -0.26 L-1.74 -0.47 L-1.54 -0.94 L-1.97 -1.70 L-1.41 -2.18 L-0.72 -1.65 L-0.22 -1.79 L0.10 -2.60 L0.83 -2.46 L0.84 -1.59 L1.26 -1.29 L2.09 -1.54 L2.44 -0.89 L1.77 -0.34 Z" fill="#3aae35"/><circle r="0.6" fill="#bfe6bd"/></g>
<g transform="matrix(0.65 -0.5 0 1 17.4 21.6)"><path d="M1.79 0.18 L2.51 0.67 L2.22 1.36 L1.36 1.17 L0.98 1.51 L1.04 2.38 L0.32 2.58 L-0.07 1.80 L-0.57 1.71 L-1.21 2.30 L-1.82 1.86 L-1.45 1.07 L-1.69 0.62 L-2.55 0.48 L-2.59 -0.26 L-1.74 -0.47 L-1.54 -0.94 L-1.97 -1.70 L-1.41 -2.18 L-0.72 -1.65 L-0.22 -1.79 L0.10 -2.60 L0.83 -2.46 L0.84 -1.59 L1.26 -1.29 L2.09 -1.54 L2.44 -0.89 L1.77 -0.34 Z" fill="#555"/><circle r="0.7" fill="#ddd"/></g>
</svg>
<span class="t" id="t14" style="top:416.68px;font-size:24px;color:#262626;letter-spacing:0.872px;left:34.6px;">Objective-C</span>
<svg class="ab" style="left:308px;top:423px" width="13" height="15" viewBox="0 0 13 15"><path d="M1 1.4 L11.2 7.5 L1 13.6 Z" fill="#262626" stroke="#262626" stroke-width="1" stroke-linejoin="round"/></svg>
<span class="t" id="t15" style="top:0.68px;font-size:24px;color:#262626;letter-spacing:0.728px;left:392.8px;">Menu Actions</span>
<svg class="ab" style="left:668px;top:7px" width="13" height="15" viewBox="0 0 13 15"><path d="M1 1.4 L11.2 7.5 L1 13.6 Z" fill="#262626" stroke="#262626" stroke-width="1" stroke-linejoin="round"/></svg>
<span class="t" id="t16" style="top:32.68px;font-size:24px;color:#262626;letter-spacing:0.760px;left:358.9px;">Other Actions</span>
<svg class="ab" style="left:668px;top:39px" width="13" height="15" viewBox="0 0 13 15"><path d="M1 1.4 L11.2 7.5 L1 13.6 Z" fill="#262626" stroke="#262626" stroke-width="1" stroke-linejoin="round"/></svg>
<span class="t" id="t17" style="top:64.68px;font-size:24px;color:#262626;letter-spacing:0.575px;left:358.9px;">File Drop Actions</span>
<svg class="ab" style="left:668px;top:71px" width="13" height="15" viewBox="0 0 13 15"><path d="M1 1.4 L11.2 7.5 L1 13.6 Z" fill="#262626" stroke="#262626" stroke-width="1" stroke-linejoin="round"/></svg>
<span class="t" id="t18" style="top:96.68px;font-size:24px;color:#262626;letter-spacing:0.382px;left:358.9px;">Language Grammars</span>
<svg class="ab" style="left:668px;top:103px" width="13" height="15" viewBox="0 0 13 15"><path d="M1 1.4 L11.2 7.5 L1 13.6 Z" fill="#262626" stroke="#262626" stroke-width="1" stroke-linejoin="round"/></svg>
<span class="t" id="t19" style="top:128.68px;font-size:24px;color:#262626;letter-spacing:0.697px;left:358.9px;">Settings</span>
<svg class="ab" style="left:668px;top:135px" width="13" height="15" viewBox="0 0 13 15"><path d="M1 1.4 L11.2 7.5 L1 13.6 Z" fill="#262626" stroke="#262626" stroke-width="1" stroke-linejoin="round"/></svg>
<span class="t" id="t20" style="top:160.68px;font-size:24px;color:#262626;letter-spacing:0.890px;left:390.8px;">Support</span>
<svg class="ab" style="left:668px;top:167px" width="13" height="15" viewBox="0 0 13 15"><path d="M1 1.4 L11.2 7.5 L1 13.6 Z" fill="#262626" stroke="#262626" stroke-width="1" stroke-linejoin="round"/></svg>
<span class="t" id="t21" style="top:192.68px;font-size:24px;color:#262626;letter-spacing:0.359px;left:358.9px;">Themes</span>
<svg class="ab" style="left:668px;top:199px" width="13" height="15" viewBox="0 0 13 15"><path d="M1 1.4 L11.2 7.5 L1 13.6 Z" fill="#262626" stroke="#262626" stroke-width="1" stroke-linejoin="round"/></svg>
<svg class="ab" style="left:360px;top:0px" width="27" height="30" viewBox="0 0 27 30">
<rect x="0" y="0" width="14" height="6" fill="#9a9a9a"/>
<rect x="1" y="5" width="24" height="24" fill="#e3e3e3" stroke="#9a9a9a" stroke-width="2"/>
<g stroke="#939393" stroke-width="1.6"><path d="M4.5 9H14M4.5 13H10.5M4.5 17H12M4.5 21H14M4.5 25H10.5"/><path d="M20 9H22M20 13H22M20 21H22"/></g>
</svg>
<svg class="ab" style="left:355px;top:161px" width="30" height="29" viewBox="0 0 30 29">
<defs><linearGradient id="fg" x1="0" y1="0" x2="0" y2="1"><stop offset="0" stop-color="#8fd1f9"/><stop offset="1" stop-color="#69b9ef"/></linearGradient>
<linearGradient id="fb" x1="0" y1="0" x2="0" y2="1"><stop offset="0" stop-color="#4e9eea"/><stop offset="0.3" stop-color="#3685dc"/></linearGradient></defs>
<path d="M1 3.2 Q1 1.2 3 1.2 H9.8 Q10.8 1.2 11.6 2 L13.2 3.6 Q13.9 4.2 15 4.2 H27 Q29 4.2 29 6.2 V25.4 Q29 27.4 27 27.4 H3 Q1 27.4 1 25.4 Z" fill="url(#fb)"/>
<path d="M1 9 Q1 7.4 2.6 7.4 H27.4 Q29 7.4 29 9 V25.8 Q29 27.4 27.4 27.4 H2.6 Q1 27.4 1 25.8 Z" fill="url(#fg)"/>
<path d="M1 22.9 H29" stroke="#5eafe8" stroke-width="0.8"/>
<path d="M2 27.8 H28" stroke="#b9a79a" stroke-width="0.7" opacity="0.6"/>
</svg>
<div class="ab" style="left:720px;top:2px;width:26px;height:26px;border-radius:13px;background:linear-gradient(#b4db87,#98c766);"></div><span class="t" style="left:720px;width:26px;text-align:center;top:-1px;font-size:17px;font-weight:bold;color:#fff">C</span>
<span class="t" id="t22" style="top:0.68px;font-size:24px;color:#262626;letter-spacing:0.014px;left:752.7px;">Copy as Bookmarklet to…</span>
<div class="ab" style="left:720px;top:34px;width:26px;height:26px;border-radius:13px;background:linear-gradient(#b4db87,#98c766);"></div><span class="t" style="left:720px;width:26px;text-align:center;top:31px;font-size:17px;font-weight:bold;color:#fff">C</span>
<span class="t" id="t23" style="top:32.68px;font-size:24px;color:#262626;letter-spacing:-0.079px;left:752.7px;">Reformat Document / S…</span>
<span class="t" id="t24" style="top:66.38px;font-size:22px;color:#b4b4b4;left:718.5px;">~</span>
<div class="ab" style="left:720px;top:98px;width:26px;height:26px;border-radius:13px;background:linear-gradient(#b4db87,#98c766);"></div><span class="t" style="left:720px;width:26px;text-align:center;top:95px;font-size:17px;font-weight:bold;color:#fff">C</span>
<span class="t" id="t25" style="top:96.68px;font-size:24px;color:#262626;letter-spacing:0.103px;left:752.7px;">Documentation for Wor…</span>
<span class="t" id="t26" style="top:130.38px;font-size:22px;color:#b4b4b4;left:718.5px;">~</span>
<div class="ab" style="left:720px;top:162px;width:26px;height:26px;border-radius:13px;background:linear-gradient(#d3bff1,#b58ce7);"></div><span class="t" style="left:720px;width:26px;text-align:center;top:159px;font-size:17px;font-weight:bold;color:#fff">S</span>
<span class="t" id="t27" style="top:160.68px;font-size:24px;color:#262626;letter-spacing:0.732px;left:752.7px;">error</span>
<div class="ab" style="left:720px;top:194px;width:26px;height:26px;border-radius:13px;background:linear-gradient(#d3bff1,#b58ce7);"></div><span class="t" style="left:720px;width:26px;text-align:center;top:191px;font-size:17px;font-weight:bold;color:#fff">S</span>
<span class="t" id="t28" style="top:192.68px;font-size:24px;color:#262626;letter-spacing:0.484px;left:752.7px;">log</span>
<div class="ab" style="left:720px;top:226px;width:26px;height:26px;border-radius:13px;background:linear-gradient(#d3bff1,#b58ce7);"></div><span class="t" style="left:720px;width:26px;text-align:center;top:223px;font-size:17px;font-weight:bold;color:#fff">S</span>
<span class="t" id="t29" style="top:224.68px;font-size:24px;color:#262626;letter-spacing:0.356px;left:752.7px;">warn</span>
<span class="t" id="t30" style="top:258.38px;font-size:22px;color:#b4b4b4;left:718.5px;">~</span>
<span class="t" id="t31" style="top:288.68px;font-size:24px;color:#262626;letter-spacing:0.056px;left:718.6px;">Core</span>
<svg class="ab" style="left:1028px;top:295px" width="13" height="15" viewBox="0 0 13 15"><path d="M1 1.4 L11.2 7.5 L1 13.6 Z" fill="#262626" stroke="#262626" stroke-width="1" stroke-linejoin="round"/></svg>
<span class="t" id="t32" style="top:320.68px;font-size:24px;color:#262626;letter-spacing:-0.650px;left:718.6px;">DOM</span>
<svg class="ab" style="left:1028px;top:327px" width="13" height="15" viewBox="0 0 13 15"><path d="M1 1.4 L11.2 7.5 L1 13.6 Z" fill="#262626" stroke="#262626" stroke-width="1" stroke-linejoin="round"/></svg>
<span class="t" id="t33" style="top:352.68px;font-size:24px;color:#262626;letter-spacing:-0.686px;left:718.6px;">BOM</span>
<svg class="ab" style="left:1028px;top:359px" width="13" height="15" viewBox="0 0 13 15"><path d="M1 1.4 L11.2 7.5 L1 13.6 Z" fill="#262626" stroke="#262626" stroke-width="1" stroke-linejoin="round"/></svg>
<div class="ab" style="left:720px;top:386px;width:26px;height:26px;border-radius:13px;background:linear-gradient(#b4db87,#98c766);"></div><span class="t" style="left:720px;width:26px;text-align:center;top:383px;font-size:17px;font-weight:bold;color:#fff">C</span>
<span class="t" id="t34" style="top:384.68px;font-size:24px;color:#262626;letter-spacing:0.140px;left:752.7px;">Save &amp; Reload in TFPro</span>
</div>
<div class="ab" style="left:0;top:492px;width:1130px;height:20px;background:#fcfcfc;box-sizing:border-box;border-top:1px solid #d9d9d9;border-bottom:1px solid #cfcfcf"></div>
<div class="ab" style="left:556px;top:496px;width:12px;height:12px;border-radius:6px;background:#dedede"></div>
<div class="ab" style="left:0;top:512px;width:1130px;height:640px;background:#fff"></div>
<div class="ab" style="left:0;top:512px;width:78px;height:640px;background:#e6e6e6"></div>
<div class="ab" style="left:78px;top:512px;width:2px;height:640px;background:#9c9c9c"></div>
<div class="ab" style="left:1108px;top:512px;width:2px;height:640px;background:#a3a3a3"></div>
<div class="ab" style="left:0;top:944px;width:78px;height:32px;background:#f6f6f6;box-sizing:border-box;border-top:2px solid #bcbcbc;border-bottom:2px solid #bcbcbc"></div>
<span class="t" id="t35" style="top:528.43px;font-size:21px;color:#8b8b8b;font-family:'DejaVu Sans Mono', 'Liberation Mono', monospace;right:1770.4px;">1</span>
<span class="t" style="left:96px;top:527.70px;font-size:24px;font-family:'DejaVu Sans Mono', 'Liberation Mono', monospace"><span style="color:#2f7ff6;font-style:oblique;">#!/bin/bash</span></span>
<span class="t" id="t36" style="top:560.43px;font-size:21px;color:#8b8b8b;font-family:'DejaVu Sans Mono', 'Liberation Mono', monospace;right:1770.4px;">2</span>
<span class="t" style="left:96px;top:559.70px;font-size:24px;font-family:'DejaVu Sans Mono', 'Liberation Mono', monospace"><span style="color:#2f7ff6;font-style:oblique;"># This script is used together with TapForms Pro script "Open in</span></span>
<span class="t" id="t37" style="top:592.43px;font-size:21px;color:#8b8b8b;font-family:'DejaVu Sans Mono', 'Liberation Mono', monospace;right:1770.4px;">·</span>
<span class="t" style="left:96px;top:591.70px;font-size:24px;font-family:'DejaVu Sans Mono', 'Liberation Mono', monospace"><span style="color:#2f7ff6;font-style:oblique;">  External Editor" by Daniel Leu</span></span>
<span class="t" id="t38" style="top:624.43px;font-size:21px;color:#8b8b8b;font-family:'DejaVu Sans Mono', 'Liberation Mono', monospace;right:1770.4px;">3</span>
<span class="t" id="t39" style="top:656.43px;font-size:21px;color:#8b8b8b;font-family:'DejaVu Sans Mono', 'Liberation Mono', monospace;right:1770.4px;">4</span>
<span class="t" style="left:96px;top:655.70px;font-size:24px;font-family:'DejaVu Sans Mono', 'Liberation Mono', monospace"><span style="color:#000;">script=</span><span style="color:#2b7a21;">"</span><span style="color:#4a90a3;">${TM_FILEPATH</span><span style="color:#0740f6;">/</span><span style="color:#2b7a21;">'.js'</span><span style="color:#0740f6;">/</span><span style="color:#4a90a3;">-callback.sh}</span><span style="color:#2b7a21;">"</span></span>
<span class="t" id="t40" style="top:688.43px;font-size:21px;color:#8b8b8b;font-family:'DejaVu Sans Mono', 'Liberation Mono', monospace;right:1770.4px;">5</span>
<span class="t" id="t41" style="top:720.43px;font-size:21px;color:#8b8b8b;font-family:'DejaVu Sans Mono', 'Liberation Mono', monospace;right:1770.4px;">6</span>
<span class="t" style="left:96px;top:719.70px;font-size:24px;font-family:'DejaVu Sans Mono', 'Liberation Mono', monospace"><span style="color:#2f7ff6;font-style:oblique;"># make script executable</span></span>
<span class="t" id="t42" style="top:752.43px;font-size:21px;color:#8b8b8b;font-family:'DejaVu Sans Mono', 'Liberation Mono', monospace;right:1770.4px;">7</span>
<svg class="ab" style="left:54px;top:763.5px" width="18" height="15" viewBox="0 0 18 15"><path d="M0.8 0.6 H17.2 L9 14.7 Z" fill="#8e8e8e"/></svg>
<span class="t" style="left:96px;top:751.70px;font-size:24px;font-family:'DejaVu Sans Mono', 'Liberation Mono', monospace"><span style="color:#0740f6;font-weight:bold;">if</span><span style="color:#000;"> chmod +x </span><span style="color:#2b7a21;">"</span><span style="color:#4a90a3;">${script}</span><span style="color:#2b7a21;">"</span><span style="color:#000;"> </span><span style="color:#0740f6;font-weight:bold;">&amp;&amp;</span><span style="color:#000;"> [[ </span><span style="color:#0740f6;font-weight:bold;">-x</span><span style="color:#000;"> </span><span style="color:#2b7a21;">"</span><span style="color:#4a90a3;">${script}</span><span style="color:#2b7a21;">"</span><span style="color:#000;"> ]]</span></span>
<span class="t" id="t43" style="top:784.43px;font-size:21px;color:#8b8b8b;font-family:'DejaVu Sans Mono', 'Liberation Mono', monospace;right:1770.4px;">8</span>
<span class="t" style="left:96px;top:783.70px;font-size:24px;font-family:'DejaVu Sans Mono', 'Liberation Mono', monospace"><span style="color:#000;">   </span><span style="color:#0740f6;font-weight:bold;">then</span><span style="color:#000;"> </span><span style="color:#4a5986;font-weight:bold;">echo</span><span style="color:#000;"> </span><span style="color:#2b7a21;">"‘</span><span style="color:#4a90a3;">${script}</span><span style="color:#2b7a21;">’ is now executable."</span></span>
<span class="t" id="t44" style="top:816.43px;font-size:21px;color:#8b8b8b;font-family:'DejaVu Sans Mono', 'Liberation Mono', monospace;right:1770.4px;">9</span>
<span class="t" style="left:96px;top:815.70px;font-size:24px;font-family:'DejaVu Sans Mono', 'Liberation Mono', monospace"><span style="color:#000;">   </span><span style="color:#0740f6;font-weight:bold;">else</span><span style="color:#000;"> </span><span style="color:#4a5986;font-weight:bold;">echo</span><span style="color:#000;"> </span><span style="color:#2b7a21;">"Failed making ‘</span><span style="color:#4a90a3;">${script}</span><span style="color:#2b7a21;">’ executable"</span></span>
<span class="t" id="t45" style="top:848.43px;font-size:21px;color:#8b8b8b;font-family:'DejaVu Sans Mono', 'Liberation Mono', monospace;right:1770.4px;">10</span>
<svg class="ab" style="left:54px;top:855px" width="18" height="15" viewBox="0 0 18 15"><path d="M0.8 14.4 H17.2 L9 0.4 Z" fill="#8e8e8e"/></svg>
<span class="t" style="left:96px;top:847.70px;font-size:24px;font-family:'DejaVu Sans Mono', 'Liberation Mono', monospace"><span style="color:#0740f6;font-weight:bold;">fi</span></span>
<span class="t" id="t46" style="top:880.43px;font-size:21px;color:#8b8b8b;font-family:'DejaVu Sans Mono', 'Liberation Mono', monospace;right:1770.4px;">11</span>
<span class="t" id="t47" style="top:912.43px;font-size:21px;color:#8b8b8b;font-family:'DejaVu Sans Mono', 'Liberation Mono', monospace;right:1770.4px;">12</span>
<span class="t" style="left:96px;top:911.70px;font-size:24px;font-family:'DejaVu Sans Mono', 'Liberation Mono', monospace"><span style="color:#2f7ff6;font-style:oblique;"># launch reload script</span></span>
<span class="t" id="t48" style="top:944.43px;font-size:21px;color:#000;font-family:'DejaVu Sans Mono', 'Liberation Mono', monospace;right:1770.4px;">13</span>
<svg class="ab" style="left:54px;top:955.5px" width="18" height="15" viewBox="0 0 18 15"><path d="M0.8 0.6 H17.2 L9 14.7 Z" fill="#000"/></svg>
<span class="t" style="left:96px;top:943.70px;font-size:24px;font-family:'DejaVu Sans Mono', 'Liberation Mono', monospace"><span style="color:#0740f6;font-weight:bold;">if</span><span style="color:#000;"> </span><span style="color:#4a90a3;">${script}</span></span>
<span class="t" id="t49" style="top:976.43px;font-size:21px;color:#8b8b8b;font-family:'DejaVu Sans Mono', 'Liberation Mono', monospace;right:1770.4px;">14</span>
<span class="t" style="left:96px;top:975.70px;font-size:24px;font-family:'DejaVu Sans Mono', 'Liberation Mono', monospace"><span style="color:#000;">   </span><span style="color:#0740f6;font-weight:bold;">then</span><span style="color:#000;"> </span><span style="color:#4a5986;font-weight:bold;">echo</span><span style="color:#000;"> </span><span style="color:#2b7a21;">"‘</span><span style="color:#4a90a3;">${TM_DISPLAYNAME}</span><span style="color:#2b7a21;">’ reloaded in TapForms Pro."</span></span>
<span class="t" id="t50" style="top:1008.43px;font-size:21px;color:#8b8b8b;font-family:'DejaVu Sans Mono', 'Liberation Mono', monospace;right:1770.4px;">15</span>
<span class="t" style="left:96px;top:1007.70px;font-size:24px;font-family:'DejaVu Sans Mono', 'Liberation Mono', monospace"><span style="color:#000;">   </span><span style="color:#0740f6;font-weight:bold;">else</span><span style="color:#000;"> </span><span style="color:#4a5986;font-weight:bold;">echo</span><span style="color:#000;"> </span><span style="color:#2b7a21;">"Failed reloading ‘</span><span style="color:#4a90a3;">${TM_DISPLAYNAME}</span><span style="color:#2b7a21;">’ in TapForms Pro"</span></span>
<span class="t" id="t51" style="top:1040.43px;font-size:21px;color:#8b8b8b;font-family:'DejaVu Sans Mono', 'Liberation Mono', monospace;right:1770.4px;">16</span>
<span class="t" id="t52" style="top:1072.43px;font-size:21px;color:#8b8b8b;font-family:'DejaVu Sans Mono', 'Liberation Mono', monospace;right:1770.4px;">17</span>
<svg class="ab" style="left:54px;top:1079px" width="18" height="15" viewBox="0 0 18 15"><path d="M0.8 14.4 H17.2 L9 0.4 Z" fill="#8e8e8e"/></svg>
<span class="t" style="left:96px;top:1071.70px;font-size:24px;font-family:'DejaVu Sans Mono', 'Liberation Mono', monospace"><span style="color:#0740f6;font-weight:bold;">fi</span></span>
<div class="ab" style="left:270px;top:944px;width:2px;height:31px;background:#000"></div>
<div class="ab" style="left:0;top:1152px;width:1130px;height:48px;background:#fbf2ef;box-sizing:border-box;border-top:2px solid #dcd5d3"></div>
<span class="t" id="t53" style="top:1162.68px;font-size:24px;color:#736967;letter-spacing:0.163px;left:15.6px;">Line:</span>
<span class="t" id="t54" style="top:1162.68px;font-size:24px;color:#736967;letter-spacing:1.234px;left:119px;">13:13</span>
<span class="t" id="t55" style="top:1162.68px;font-size:24px;color:#484443;letter-spacing:0.569px;left:213px;">Shell Script (Bash)</span>
<span class="t" id="t56" style="top:1162.68px;font-size:24px;color:#484443;letter-spacing:0.473px;left:479.5px;">Tab Size:</span>
<span class="t" id="t57" style="top:1162.68px;font-size:24px;color:#484443;left:605.5px;">4</span>
<div class="ab" style="left:201px;top:1162px;width:2px;height:30px;background:#e0d7d4"></div>
<div class="ab" style="left:466px;top:1162px;width:2px;height:30px;background:#e0d7d4"></div>
<div class="ab" style="left:653px;top:1162px;width:2px;height:30px;background:#e0d7d4"></div>
<div class="ab" style="left:735px;top:1162px;width:2px;height:30px;background:#e0d7d4"></div>
<div class="ab" style="left:1070px;top:1162px;width:2px;height:30px;background:#e0d7d4"></div>
<svg class="ab" style="left:435px;top:1163px" width="20" height="28" viewBox="-10 -14 20 28"><path d="M-5.5 -3.799999999999999 L0 -9.2 L5.5 -3.799999999999999 M-5.5 3.799999999999999 L0 9.2 L5.5 3.799999999999999" fill="none" stroke="#4a4645" stroke-width="2.8" stroke-linecap="round" stroke-linejoin="round"/></svg>
<svg class="ab" style="left:705px;top:1163px" width="20" height="28" viewBox="-10 -14 20 28"><path d="M-5.5 -3.799999999999999 L0 -9.2 L5.5 -3.799999999999999 M-5.5 3.799999999999999 L0 9.2 L5.5 3.799999999999999" fill="none" stroke="#4a4645" stroke-width="2.8" stroke-linecap="round" stroke-linejoin="round"/></svg>
<svg class="ab" style="left:1038px;top:1164px" width="20" height="28" viewBox="-10 -14 20 28"><path d="M-5.5 -3.799999999999999 L0 -9.2 L5.5 -3.799999999999999 M-5.5 3.799999999999999 L0 9.2 L5.5 3.799999999999999" fill="none" stroke="#4a4645" stroke-width="2.8" stroke-linecap="round" stroke-linejoin="round"/></svg>
<svg class="ab" style="left:624px;top:1170px" width="20" height="14" viewBox="0 0 20 14"><path d="M4.5 5 L10 10.3 L15.5 5" fill="none" stroke="#4a4645" stroke-width="2.8" stroke-linecap="round" stroke-linejoin="round"/></svg>
<svg class="ab" style="left:674px;top:1164px" width="26" height="26" viewBox="0 0 26 26"><circle cx="13.1" cy="13" r="10.9" fill="none" stroke="#4a4645" stroke-width="2"/><circle cx="7.5" cy="13" r="1.4" fill="#4a4645"/><circle cx="13.1" cy="13" r="1.4" fill="#4a4645"/><circle cx="18.7" cy="13" r="1.4" fill="#4a4645"/></svg>
<div class="ab" style="left:1088px;top:1165px;width:24px;height:24px;border-radius:12px;background:#f0aba4"></div>
<div class="ab" style="left:1130px;top:51px;width:2px;height:1149px;background:#dbd4d1"></div>
<div class="ab" style="left:1410px;top:90px;width:28px;height:28px;border-radius:6.5px;background:linear-gradient(#4b92fa,#2f78f4);box-shadow:0 1px 1.5px rgba(0,0,0,.25)"></div>
<svg class="ab" style="left:1410px;top:90px" width="28" height="28" viewBox="0 0 28 28"><path d="M6.3 14.3 L12.2 20.8 L21.2 7" fill="none" stroke="#fff" stroke-width="3.2" stroke-linecap="round" stroke-linejoin="round"/></svg>
<span class="t" id="t58" style="top:89.99px;font-size:26px;color:#262626;letter-spacing:0.374px;left:1451px;">Enable this item</span>
<span class="t" id="t59" style="top:142.99px;font-size:26px;color:#262626;letter-spacing:-0.070px;left:1314.7px;">Name:</span>
<div class="fld" style="left:1411px;top:135px;width:366px;height:42px"></div>
<span class="t" id="t60" style="top:142.99px;font-size:26px;color:#262626;letter-spacing:-0.014px;left:1418.8px;">Save &amp; Reload in TFPro</span>
<span class="t" id="t61" style="top:202.99px;font-size:26px;color:#262626;letter-spacing:0.538px;left:1204.6px;">Scope Selector:</span>
<div class="fld" style="left:1411px;top:195px;width:366px;height:42px"></div>
<span class="t" id="t62" style="top:202.99px;font-size:26px;color:#262626;letter-spacing:0.469px;left:1418.8px;">source.js</span>
<span class="t" id="t63" style="top:266.99px;font-size:26px;color:#262626;letter-spacing:0.195px;left:1204.6px;">Key Equivalent:</span>
<div class="ab" style="left:1410px;top:258px;width:368px;height:44px;background:#fff;box-sizing:border-box;border:2px solid #a5a3a2"></div>
<span class="t" id="t64" style="top:330.99px;font-size:26px;color:#262626;letter-spacing:0.555px;left:1240.9px;">Tab Trigger:</span>
<div class="fld" style="left:1411px;top:323px;width:366px;height:42px"></div>
<span class="t" id="t65" style="top:390.99px;font-size:26px;color:#262626;letter-spacing:0.261px;left:1198.9px;">Semantic Class:</span>
<div class="fld" style="left:1411px;top:383px;width:366px;height:42px"></div>
<span class="t" id="t66" style="top:454.99px;font-size:26px;color:#262626;letter-spacing:0.691px;left:1202.7px;">Content Match:</span>
<div class="fld" style="left:1411px;top:447px;width:366px;height:42px"></div>
<svg class="ab" style="left:1562px;top:268px" width="26" height="26" viewBox="0 0 26 26"><path d="M12 5.4 L21.6 14.4 H16.4 V20.8 Q16.4 21.9 15.3 21.9 H8.7 Q7.6 21.9 7.6 20.8 V14.4 H2.4 Z" fill="none" stroke="#262626" stroke-width="2.2" stroke-linejoin="round"/></svg>
<span class="t" id="t67" style="top:266.84px;font-size:25px;color:#262626;left:1586.5px;font-family:'DejaVu Sans',sans-serif;">⌘</span>
<span class="t" id="t68" style="top:265.94px;font-size:27px;color:#262626;left:1609.5px;">S</span>
<svg class="ab" style="left:1750px;top:272px" width="16" height="16" viewBox="0 0 16 16"><path d="M2 2 L14 14 M14 2 L2 14" stroke="#7f7b79" stroke-width="2.2" stroke-linecap="round"/></svg>
<span class="t" id="t69" style="top:510.49px;font-size:26px;color:#262626;letter-spacing:-0.625px;left:1328.8px;">Save:</span>
<div class="pop" style="left:1410px;top:506px;width:366px"></div><div class="stp" style="left:1740px;top:510px"></div><svg class="ab" style="left:1746px;top:511.20000000000005px" width="20" height="28" viewBox="-10 -14 20 28"><path d="M-5.5 -3.799999999999999 L0 -8.7 L5.5 -3.799999999999999 M-5.5 3.799999999999999 L0 8.7 L5.5 3.799999999999999" fill="none" stroke="#fff" stroke-width="2.9" stroke-linecap="round" stroke-linejoin="round"/></svg><span class="t" id="t70" style="top:507.99px;font-size:26px;color:#262626;letter-spacing:0.665px;left:1426.8px;">Current Document</span>
<span class="t" id="t71" style="top:580.49px;font-size:26px;color:#262626;letter-spacing:0.428px;left:1320.8px;">Input:</span>
<div class="pop" style="left:1410px;top:576px;width:234px"></div><div class="stp" style="left:1608px;top:580px"></div><svg class="ab" style="left:1614px;top:581.2px" width="20" height="28" viewBox="-10 -14 20 28"><path d="M-5.5 -3.799999999999999 L0 -8.7 L5.5 -3.799999999999999 M-5.5 3.799999999999999 L0 8.7 L5.5 3.799999999999999" fill="none" stroke="#fff" stroke-width="2.9" stroke-linecap="round" stroke-linejoin="round"/></svg><span class="t" id="t72" style="top:577.99px;font-size:26px;color:#262626;letter-spacing:0.729px;left:1426.8px;">Nothing</span>
<span class="t" id="t73" style="top:636.99px;font-size:26px;color:#262626;letter-spacing:0.270px;left:1408.8px;">Format:</span>
<div class="pop" style="left:1520px;top:632px;width:162px"></div><div class="stp" style="left:1646px;top:636px"></div><svg class="ab" style="left:1652px;top:637.2px" width="20" height="28" viewBox="-10 -14 20 28"><path d="M-5.5 -3.799999999999999 L0 -8.7 L5.5 -3.799999999999999 M-5.5 3.799999999999999 L0 8.7 L5.5 3.799999999999999" fill="none" stroke="#fff" stroke-width="2.9" stroke-linecap="round" stroke-linejoin="round"/></svg><span class="t" id="t74" style="top:633.99px;font-size:26px;color:#262626;letter-spacing:0.238px;left:1536.8px;">Text</span>
<span class="t" id="t75" style="top:710.49px;font-size:26px;color:#262626;letter-spacing:0.853px;left:1298.8px;">Output:</span>
<div class="pop" style="left:1410px;top:706px;width:330px"></div><div class="stp" style="left:1704px;top:710px"></div><svg class="ab" style="left:1710px;top:711.2px" width="20" height="28" viewBox="-10 -14 20 28"><path d="M-5.5 -3.799999999999999 L0 -8.7 L5.5 -3.799999999999999 M-5.5 3.799999999999999 L0 8.7 L5.5 3.799999999999999" fill="none" stroke="#fff" stroke-width="2.9" stroke-linecap="round" stroke-linejoin="round"/></svg><span class="t" id="t76" style="top:707.99px;font-size:26px;color:#262626;letter-spacing:0.423px;left:1426.8px;">Show in Tool Tip</span>
<span class="t" id="t77" style="top:768.99px;font-size:26px;color:#262626;letter-spacing:0.270px;left:1408.8px;">Format:</span>
<div class="pop" style="left:1520px;top:764px;width:256px"></div><div class="stp" style="left:1740px;top:768px"></div><svg class="ab" style="left:1746px;top:769.2px" width="20" height="28" viewBox="-10 -14 20 28"><path d="M-5.5 -3.799999999999999 L0 -8.7 L5.5 -3.799999999999999 M-5.5 3.799999999999999 L0 8.7 L5.5 3.799999999999999" fill="none" stroke="#fff" stroke-width="2.9" stroke-linecap="round" stroke-linejoin="round"/></svg><span class="t" id="t78" style="top:765.99px;font-size:26px;color:#262626;letter-spacing:0.238px;left:1536.8px;">Text</span>
<span class="t" id="t79" style="top:844.99px;font-size:26px;color:#262626;letter-spacing:0.368px;left:1182.8px;">Caret Placement:</span>
<div class="pop" style="left:1410px;top:840px;width:366px"></div><div class="stp" style="left:1740px;top:844px"></div><svg class="ab" style="left:1746px;top:845.2px" width="20" height="28" viewBox="-10 -14 20 28"><path d="M-5.5 -3.799999999999999 L0 -8.7 L5.5 -3.799999999999999 M-5.5 3.799999999999999 L0 8.7 L5.5 3.799999999999999" fill="none" stroke="#fff" stroke-width="2.9" stroke-linecap="round" stroke-linejoin="round"/></svg><span class="t" id="t80" style="top:841.99px;font-size:26px;color:#262626;letter-spacing:0.819px;left:1426.8px;">After Output</span>
<svg class="ab" style="left:1652px;top:594px" width="28" height="28" viewBox="0 0 28 28"><path d="M1 2.6 C12 2.6 20 11 20 24.5" fill="none" stroke="#1e1e1e" stroke-width="1.8" stroke-linecap="round"/><path d="M15 19.6 L20 25.4 L25 18.6" fill="none" stroke="#1e1e1e" stroke-width="1.8" stroke-linecap="round" stroke-linejoin="round"/></svg>
<svg class="ab" style="left:1748px;top:726px" width="28" height="28" viewBox="0 0 28 28"><path d="M1 2.6 C12 2.6 20 11 20 24.5" fill="none" stroke="#1e1e1e" stroke-width="1.8" stroke-linecap="round"/><path d="M15 19.6 L20 25.4 L25 18.6" fill="none" stroke="#1e1e1e" stroke-width="1.8" stroke-linecap="round" stroke-linejoin="round"/></svg>
<div class="ab" style="left:1411px;top:901px;width:26px;height:26px;border-radius:6px;background:linear-gradient(#f4f4f4,#fff 30%);box-shadow:0 0 0 1px rgba(0,0,0,.19),inset 0 1px 2px rgba(0,0,0,.10)"></div>
<span class="t" id="t81" style="top:898.99px;font-size:26px;color:#262626;letter-spacing:0.669px;left:1450.8px;">Scroll for new output</span>
<svg class="ab" style="left:1798px;top:1166px" width="20" height="34" viewBox="1798 1166 20 34"><path d="M1818 1168 C1817.6 1186 1815.6 1195 1806.5 1200 L1818 1200 Z" fill="#d4d4d4"/><path d="M1818 1168 C1817.6 1186 1815.6 1195 1806.5 1200" fill="none" stroke="#9c9c9c" stroke-width="1"/></svg>
<svg class="ab" style="left:0;top:1190px" width="10" height="10" viewBox="0 1190 10 10"><path d="M0 1194.8 Q2.4 1197.6 5.6 1200 L0 1200 Z" fill="#8f8f8f"/></svg>
</body></html>
